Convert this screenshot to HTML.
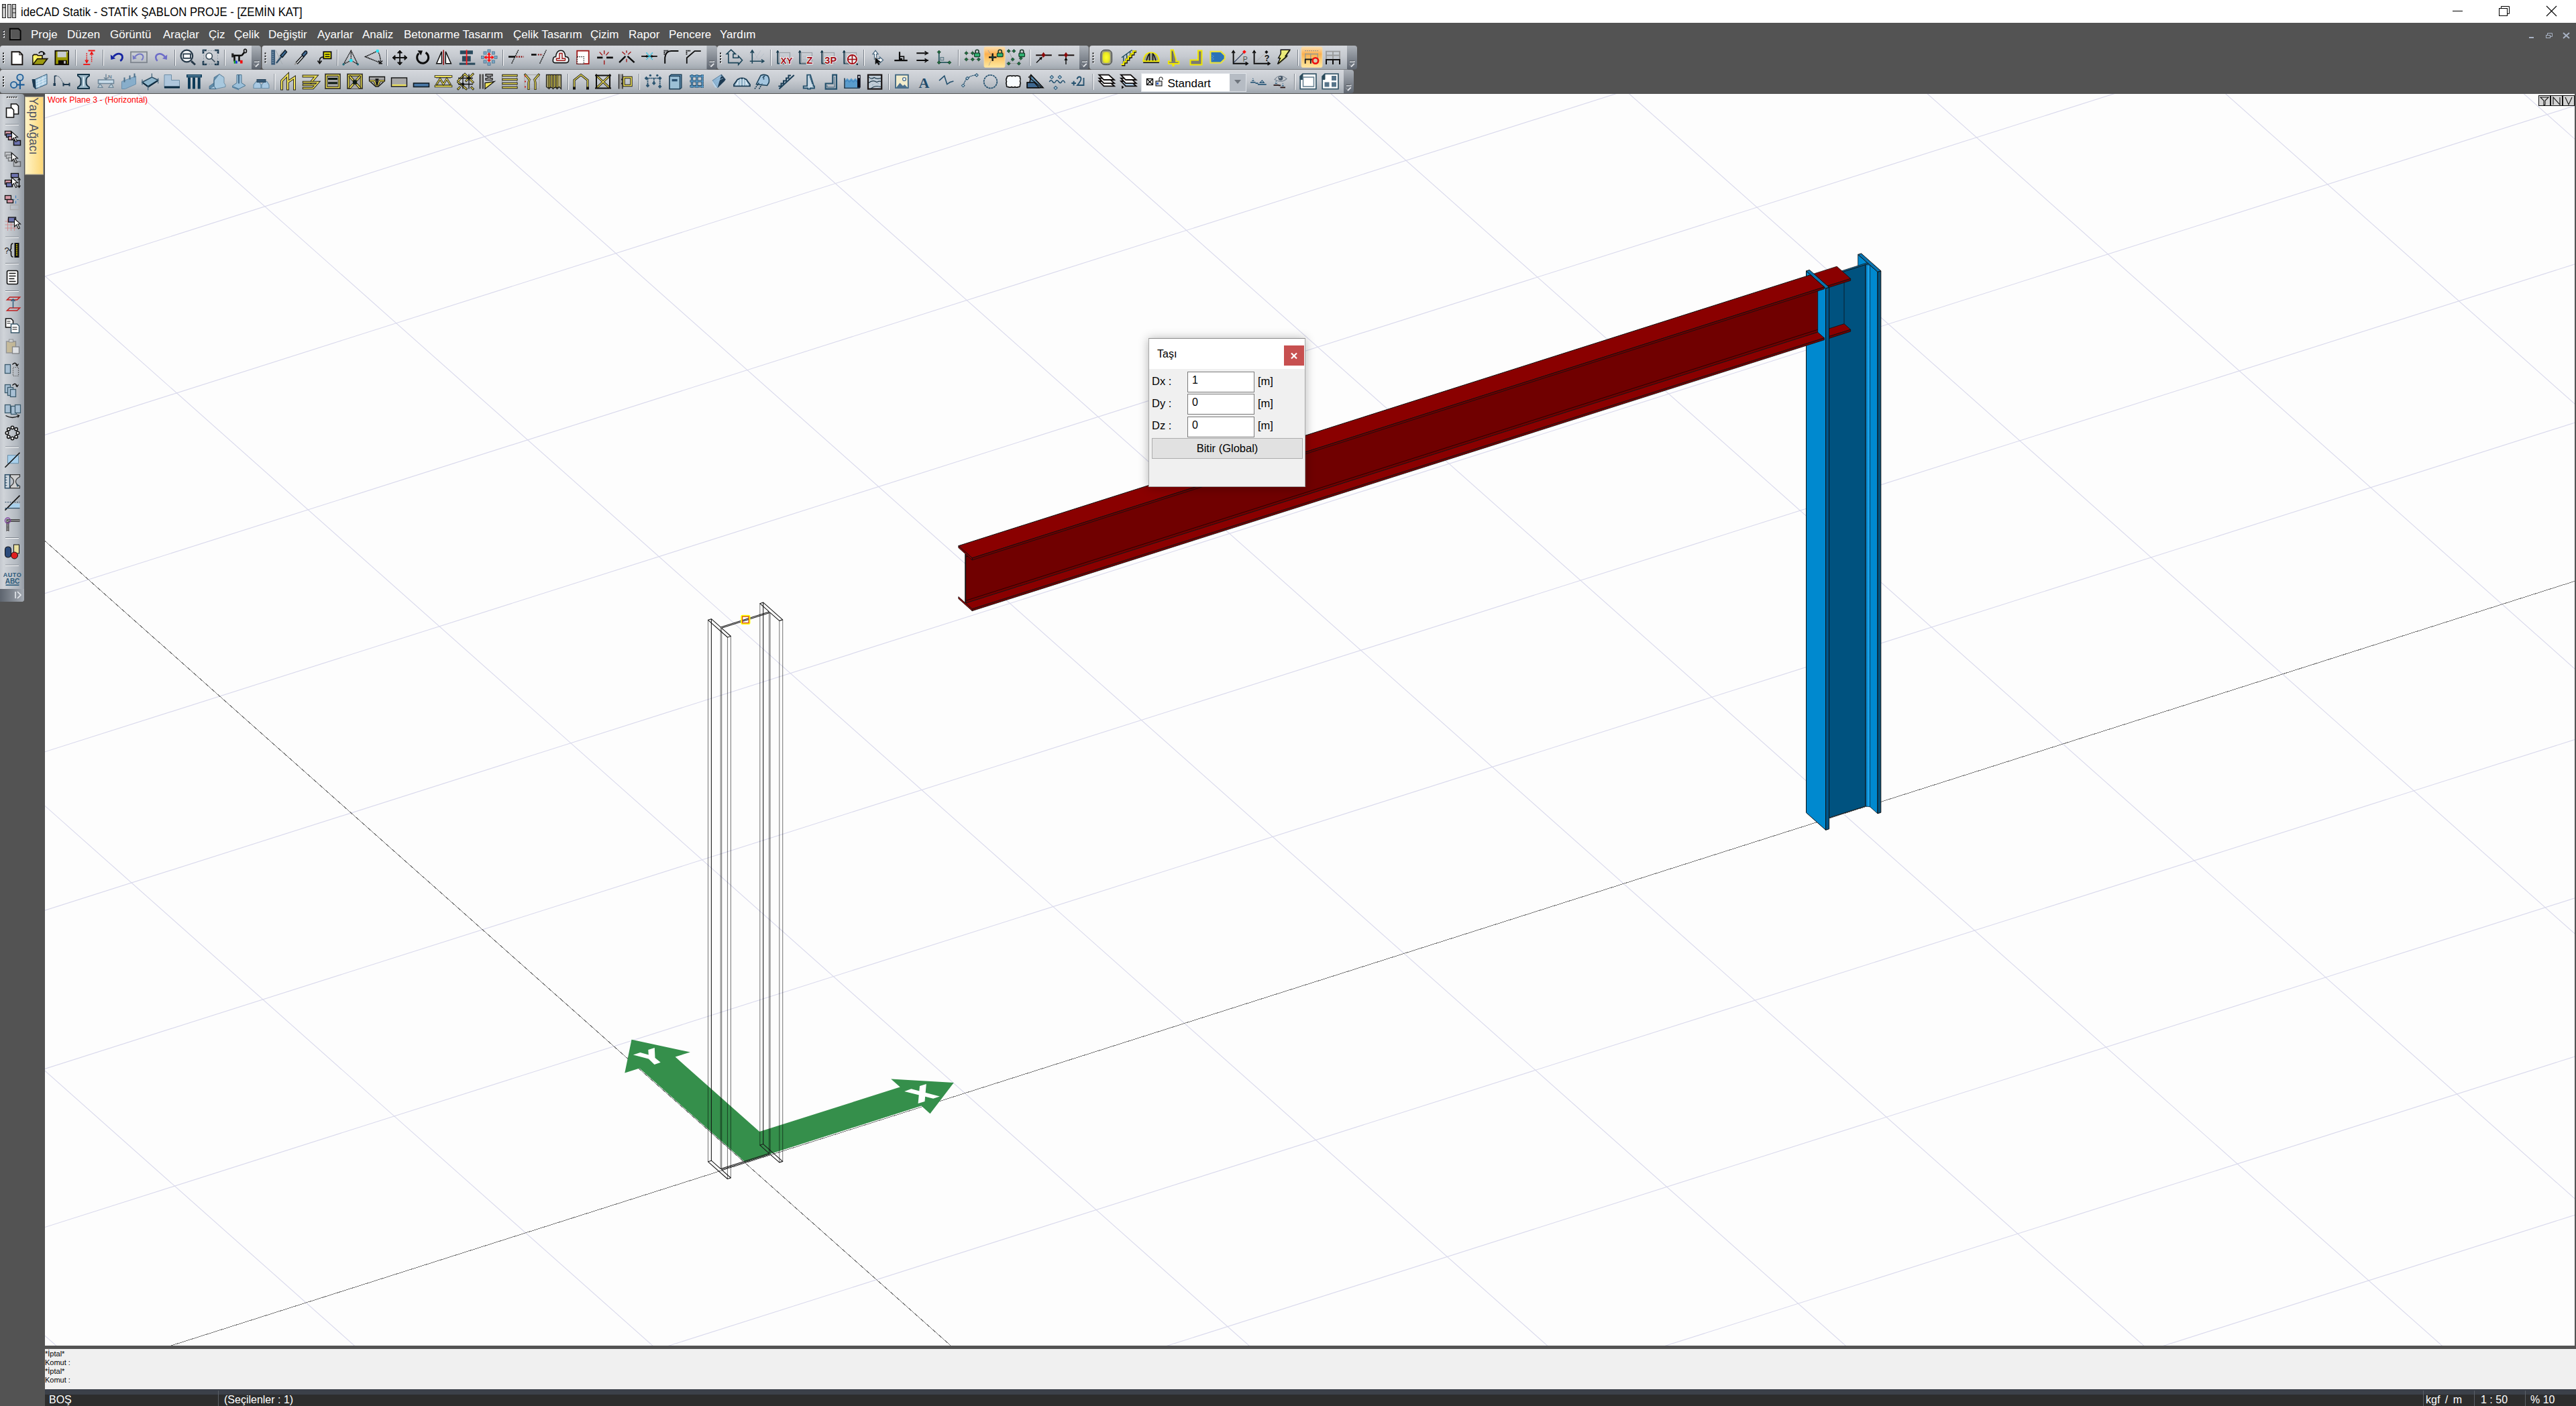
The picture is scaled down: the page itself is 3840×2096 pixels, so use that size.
<!DOCTYPE html>
<html><head><meta charset="utf-8">
<style>
*{box-sizing:border-box;margin:0;padding:0}
html,body{width:3840px;height:2096px;overflow:hidden;background:#535353;font-family:"Liberation Sans",sans-serif;position:relative}
.abs{position:absolute}
svg.vp{position:absolute;left:0;top:0}
#title{left:0;top:0;width:3840px;height:34px;background:#fff}
#title .t{position:absolute;left:31px;top:7px;font-size:18.5px;color:#000;white-space:nowrap;transform:scaleX(0.903);transform-origin:0 0}
#menu{left:0;top:34px;width:3840px;height:34px;background:#535353}
#menu span{position:absolute;top:8px;font-size:17px;color:#fff;white-space:nowrap}
.tb{position:absolute;border-radius:4px 0 0 4px;background:linear-gradient(#d4d8de 0%,#c9cdd3 45%,#b2b8bf 80%,#a2a9b1 100%);}
.tbh{position:absolute;border-radius:0 5px 5px 0;background:linear-gradient(#9ea5ad,#6d757e)}
#cmd{left:67px;top:2011px;width:3773px;height:60px;background:#f0f0f0}
#cmd div{position:absolute;left:0px;font-size:11px;color:#000;white-space:nowrap}
#status{left:67px;top:2071px;width:3773px;height:25px;background:#2d2d2d}
#status .band{position:absolute;left:0;top:0;width:100%;height:8px;background:#3b4049}
#status span{position:absolute;top:7px;font-size:16px;color:#fff;white-space:nowrap}
#status i{position:absolute;top:2px;width:1px;height:23px;background:#5a5f66}
#dlg .dl{font-size:16.5px;color:#000;white-space:nowrap}
#dlg .ib{width:100px;height:31px;background:#fff;border:1px solid #7a7a7a}
#dlg .ib span{position:absolute;left:6px;top:3px;font-size:16px;color:#000}
</style></head><body>
<div id="title" class="abs">
 <svg class="abs" style="left:3px;top:6px" width="22" height="21" viewBox="0 0 22 21">
  <rect x="0.5" y="0.5" width="5" height="20" fill="#c8c8c8" stroke="#222"/><rect x="0.5" y="0.5" width="5" height="5" fill="#aaa" stroke="#222"/>
  <rect x="8.5" y="0.5" width="5" height="20" fill="#c8c8c8" stroke="#222"/>
  <rect x="15.5" y="0.5" width="5" height="20" fill="#c8c8c8" stroke="#222"/><line x1="15" y1="7" x2="21" y2="7" stroke="#222"/><line x1="15" y1="13" x2="21" y2="13" stroke="#222"/>
 </svg>
 <div class="t">ideCAD Statik - STATİK ŞABLON PROJE - [ZEMİN KAT]</div>
 <svg class="abs" style="left:3650px;top:0" width="190" height="34" viewBox="3650 0 190 34">
  <line x1="3656" y1="16.5" x2="3671" y2="16.5" stroke="#000" stroke-width="1"/>
  <rect x="3725.5" y="12.5" width="12" height="11" fill="none" stroke="#000"/>
  <path d="M3728.5 12.5 V9.5 H3740.5 V20.5 H3737.5" fill="none" stroke="#000"/>
  <path d="M3796 9 L3811 24 M3811 9 L3796 24" stroke="#000" stroke-width="1.1"/>
 </svg>
</div>
<div id="menu" class="abs">
 <svg class="abs" style="left:0;top:0" width="40" height="34" viewBox="0 0 40 34">
  <rect x="4.8" y="12.0" width="2.2" height="2.2" fill="#fff"/><rect x="4.2" y="11.2" width="1.6" height="1.6" fill="#1a1e2a"/><rect x="4.8" y="16.0" width="2.2" height="2.2" fill="#fff"/><rect x="4.2" y="15.2" width="1.6" height="1.6" fill="#1a1e2a"/><rect x="4.8" y="20.0" width="2.2" height="2.2" fill="#fff"/><rect x="4.2" y="19.2" width="1.6" height="1.6" fill="#1a1e2a"/>
  <path d="M14.8 8.8 H27.5 L30.6 11.9 V25.2 H14.8 Z" fill="#575757" stroke="#050505" stroke-width="1.9"/><path d="M16.6 10.6 V23.4 H28.8" fill="none" stroke="#6e6e6e" stroke-width="1"/>
 </svg>
 <span style="left:46px">Proje</span>
 <span style="left:100px">Düzen</span>
 <span style="left:164px">Görüntü</span>
 <span style="left:243px">Araçlar</span>
 <span style="left:311px">Çiz</span>
 <span style="left:349px">Çelik</span>
 <span style="left:400px">Değiştir</span>
 <span style="left:473px">Ayarlar</span>
 <span style="left:540px">Analiz</span>
 <span style="left:602px">Betonarme Tasarım</span>
 <span style="left:765px">Çelik Tasarım</span>
 <span style="left:880px">Çizim</span>
 <span style="left:937px">Rapor</span>
 <span style="left:997px">Pencere</span>
 <span style="left:1073px">Yardım</span>
 <svg class="abs" style="left:3760px;top:0" width="80" height="34" viewBox="3760 34 80 34">
  <rect x="3770" y="55" width="7" height="2" fill="#a9b3c4"/>
  <rect x="3795.5" y="52.5" width="6" height="4" fill="none" stroke="#a9b3c4"/><path d="M3797.5 52.5 V49.5 H3804.5 V54.5 H3801.5" fill="none" stroke="#a9b3c4"/>
  <path d="M3821 49 L3830 57 M3830 49 L3821 57" stroke="#a9b3c4" stroke-width="2"/>
 </svg>
</div>
<svg class="abs" style="left:0;top:0" width="2030" height="140" viewBox="0 0 2030 140">
<defs><linearGradient id="bg" x1="0" y1="0" x2="0" y2="1"><stop offset="0" stop-color="#d5d8dd"/><stop offset="0.45" stop-color="#c6cad0"/><stop offset="0.8" stop-color="#b0b6bd"/><stop offset="1" stop-color="#9ea5ad"/></linearGradient><linearGradient id="hg" x1="0" y1="0" x2="0" y2="1"><stop offset="0" stop-color="#acb1b8"/><stop offset="1" stop-color="#5d646e"/></linearGradient><linearGradient id="og" x1="0" y1="0" x2="0" y2="1"><stop offset="0" stop-color="#fde0b0"/><stop offset="0.35" stop-color="#fcb04f"/><stop offset="0.7" stop-color="#fdd27a"/><stop offset="1" stop-color="#fee8a0"/></linearGradient></defs>
<rect x="0" y="68" width="379" height="35.5" rx="4" fill="url(#bg)"/>
<path d="M375 68 H385 Q389 68 389 72 V99.5 Q389 103.5 385 103.5 H375 Z" fill="url(#hg)"/><rect x="378.5" y="90.3" width="8" height="1.4" fill="#5a5e64"/><path d="M379 92.2 H385.8 V90.9" stroke="#d0d4d8" stroke-width="1.6" fill="none"/><path d="M378.2 95.5 L381.5 99.3" stroke="#8e9298" stroke-width="1.4" fill="none"/><path d="M381 99.5 L385.8 94.9" stroke="#e4e6ea" stroke-width="1.8" fill="none"/>
<rect x="390.5" y="68" width="667.0" height="35.5" rx="4" fill="url(#bg)"/>
<path d="M1053.5 68 H1065 Q1069 68 1069 72 V99.5 Q1069 103.5 1065 103.5 H1053.5 Z" fill="url(#hg)"/><rect x="1057.0" y="90.3" width="8" height="1.4" fill="#5a5e64"/><path d="M1057.5 92.2 H1064.3 V90.9" stroke="#d0d4d8" stroke-width="1.6" fill="none"/><path d="M1056.7 95.5 L1060.0 99.3" stroke="#8e9298" stroke-width="1.4" fill="none"/><path d="M1059.5 99.5 L1064.3 94.9" stroke="#e4e6ea" stroke-width="1.8" fill="none"/>
<rect x="1069" y="68" width="544" height="35.5" rx="4" fill="url(#bg)"/>
<path d="M1609 68 H1619 Q1623 68 1623 72 V99.5 Q1623 103.5 1619 103.5 H1609 Z" fill="url(#hg)"/><rect x="1612.5" y="90.3" width="8" height="1.4" fill="#5a5e64"/><path d="M1613 92.2 H1619.8 V90.9" stroke="#d0d4d8" stroke-width="1.6" fill="none"/><path d="M1612.2 95.5 L1615.5 99.3" stroke="#8e9298" stroke-width="1.4" fill="none"/><path d="M1615 99.5 L1619.8 94.9" stroke="#e4e6ea" stroke-width="1.8" fill="none"/>
<rect x="1624" y="68" width="388" height="35.5" rx="4" fill="url(#bg)"/>
<path d="M2008 68 H2019 Q2023 68 2023 72 V99.5 Q2023 103.5 2019 103.5 H2008 Z" fill="url(#hg)"/><rect x="2011.5" y="90.3" width="8" height="1.4" fill="#5a5e64"/><path d="M2012 92.2 H2018.8 V90.9" stroke="#d0d4d8" stroke-width="1.6" fill="none"/><path d="M2011.2 95.5 L2014.5 99.3" stroke="#8e9298" stroke-width="1.4" fill="none"/><path d="M2014 99.5 L2018.8 94.9" stroke="#e4e6ea" stroke-width="1.8" fill="none"/>
<rect x="0" y="104" width="2007" height="35" rx="4" fill="url(#bg)"/>
<path d="M2003 104 H2014 Q2018 104 2018 108 V135 Q2018 139 2014 139 H2003 Z" fill="url(#hg)"/><rect x="2006.5" y="125.8" width="8" height="1.4" fill="#5a5e64"/><path d="M2007 127.7 H2013.8 V126.4" stroke="#d0d4d8" stroke-width="1.6" fill="none"/><path d="M2006.2 131 L2009.5 134.8" stroke="#8e9298" stroke-width="1.4" fill="none"/><path d="M2009 135 L2013.8 130.4" stroke="#e4e6ea" stroke-width="1.8" fill="none"/>
<rect x="5" y="79.5" width="2" height="2" fill="#fff"/><rect x="4" y="78.5" width="2" height="2" fill="#111"/><rect x="5" y="83.8" width="2" height="2" fill="#fff"/><rect x="4" y="82.8" width="2" height="2" fill="#111"/><rect x="5" y="88.1" width="2" height="2" fill="#fff"/><rect x="4" y="87.1" width="2" height="2" fill="#111"/><rect x="5" y="92.4" width="2" height="2" fill="#fff"/><rect x="4" y="91.4" width="2" height="2" fill="#111"/>
<rect x="395.5" y="79.5" width="2" height="2" fill="#fff"/><rect x="394.5" y="78.5" width="2" height="2" fill="#111"/><rect x="395.5" y="83.8" width="2" height="2" fill="#fff"/><rect x="394.5" y="82.8" width="2" height="2" fill="#111"/><rect x="395.5" y="88.1" width="2" height="2" fill="#fff"/><rect x="394.5" y="87.1" width="2" height="2" fill="#111"/><rect x="395.5" y="92.4" width="2" height="2" fill="#fff"/><rect x="394.5" y="91.4" width="2" height="2" fill="#111"/>
<rect x="1074" y="79.5" width="2" height="2" fill="#fff"/><rect x="1073" y="78.5" width="2" height="2" fill="#111"/><rect x="1074" y="83.8" width="2" height="2" fill="#fff"/><rect x="1073" y="82.8" width="2" height="2" fill="#111"/><rect x="1074" y="88.1" width="2" height="2" fill="#fff"/><rect x="1073" y="87.1" width="2" height="2" fill="#111"/><rect x="1074" y="92.4" width="2" height="2" fill="#fff"/><rect x="1073" y="91.4" width="2" height="2" fill="#111"/>
<rect x="1629.5" y="79.5" width="2" height="2" fill="#fff"/><rect x="1628.5" y="78.5" width="2" height="2" fill="#111"/><rect x="1629.5" y="83.8" width="2" height="2" fill="#fff"/><rect x="1628.5" y="82.8" width="2" height="2" fill="#111"/><rect x="1629.5" y="88.1" width="2" height="2" fill="#fff"/><rect x="1628.5" y="87.1" width="2" height="2" fill="#111"/><rect x="1629.5" y="92.4" width="2" height="2" fill="#fff"/><rect x="1628.5" y="91.4" width="2" height="2" fill="#111"/>
<rect x="5" y="115.0" width="2" height="2" fill="#fff"/><rect x="4" y="114.0" width="2" height="2" fill="#111"/><rect x="5" y="119.3" width="2" height="2" fill="#fff"/><rect x="4" y="118.3" width="2" height="2" fill="#111"/><rect x="5" y="123.6" width="2" height="2" fill="#fff"/><rect x="4" y="122.6" width="2" height="2" fill="#111"/><rect x="5" y="127.9" width="2" height="2" fill="#fff"/><rect x="4" y="126.9" width="2" height="2" fill="#111"/>
<rect x="112" y="74" width="1" height="24" fill="#7b828b"/><rect x="113" y="74" width="1" height="24" fill="#fff"/>
<rect x="153" y="74" width="1" height="24" fill="#7b828b"/><rect x="154" y="74" width="1" height="24" fill="#fff"/>
<rect x="260" y="74" width="1" height="24" fill="#7b828b"/><rect x="261" y="74" width="1" height="24" fill="#fff"/>
<rect x="334" y="74" width="1" height="24" fill="#7b828b"/><rect x="335" y="74" width="1" height="24" fill="#fff"/>
<rect x="502" y="74" width="1" height="24" fill="#7b828b"/><rect x="503" y="74" width="1" height="24" fill="#fff"/>
<rect x="576" y="74" width="1" height="24" fill="#7b828b"/><rect x="577" y="74" width="1" height="24" fill="#fff"/>
<rect x="749" y="74" width="1" height="24" fill="#7b828b"/><rect x="750" y="74" width="1" height="24" fill="#fff"/>
<rect x="1148" y="74" width="1" height="24" fill="#7b828b"/><rect x="1149" y="74" width="1" height="24" fill="#fff"/>
<rect x="1287" y="74" width="1" height="24" fill="#7b828b"/><rect x="1288" y="74" width="1" height="24" fill="#fff"/>
<rect x="1428" y="74" width="1" height="24" fill="#7b828b"/><rect x="1429" y="74" width="1" height="24" fill="#fff"/>
<rect x="1534.5" y="74" width="1" height="24" fill="#7b828b"/><rect x="1535.5" y="74" width="1" height="24" fill="#fff"/>
<rect x="1934" y="74" width="1" height="24" fill="#7b828b"/><rect x="1935" y="74" width="1" height="24" fill="#fff"/>
<rect x="408.5" y="110" width="1" height="24" fill="#7b828b"/><rect x="409.5" y="110" width="1" height="24" fill="#fff"/>
<rect x="846" y="110" width="1" height="24" fill="#7b828b"/><rect x="847" y="110" width="1" height="24" fill="#fff"/>
<rect x="952" y="110" width="1" height="24" fill="#7b828b"/><rect x="953" y="110" width="1" height="24" fill="#fff"/>
<rect x="1324" y="110" width="1" height="24" fill="#7b828b"/><rect x="1325" y="110" width="1" height="24" fill="#fff"/>
<rect x="1628.5" y="110" width="1" height="24" fill="#7b828b"/><rect x="1629.5" y="110" width="1" height="24" fill="#fff"/>
<rect x="1929" y="110" width="1" height="24" fill="#7b828b"/><rect x="1930" y="110" width="1" height="24" fill="#fff"/>
<rect x="1467" y="70" width="31" height="30.5" rx="2" fill="url(#og)" stroke="#f4d9a6" stroke-width="1"/>
<rect x="1940" y="70" width="31" height="30.5" rx="2" fill="url(#og)" stroke="#f4d9a6" stroke-width="1"/>
<rect x="1701.5" y="109.5" width="156" height="27" fill="#fff" stroke="#dfe3e8"/>
<rect x="1833" y="110" width="24" height="26" fill="#b6bcc4"/>
<path d="M1840 119 L1850 119 L1845 125 Z" fill="#6e747c"/>
<rect x="1709.5" y="117.5" width="9" height="9" fill="#fff" stroke="#000" stroke-width="1.3"/><path d="M1710 118 L1718 126 M1718 118 L1710 126" stroke="#000" stroke-width="1.3"/>
<rect x="1723" y="121" width="9" height="7" fill="#ddd" stroke="#000"/><path d="M1728 121 V117 Q1728 115 1730.5 115 Q1733 115 1733 117 V119" fill="none" stroke="#000"/><rect x="1724" y="123" width="3" height="3" fill="#3a6bd4"/>
<text x="1740.5" y="130" font-family="Liberation Sans, sans-serif" font-size="17" fill="#000">Standart</text>
<g transform="translate(25.5,86)"><path d="M-8 -8.7 H3.6 L7.9 -4.4 V10.3 H-8 Z" fill="#fff" stroke="#161210" stroke-width="1.9" /><path d="M3.4 -8.5 V-4.3 H7.7" fill="none" stroke="#161210" stroke-width="1.1" /></g>
<g transform="translate(59.5,86)"><path d="M-10.6 10.3 V-3.2 L-8.8 -4.6 H-4.5 L-3 -3.2 H3.5 V1.5" fill="#fff060" stroke="#1a1408" stroke-width="1.6" /><path d="M-10 -2.5 L-3 2 L-9.5 8 Z" fill="#ffff70" stroke="none" stroke-width="0" /><path d="M-10.4 10.3 L-3.8 1.6 H11.2 L4.6 10.3 Z" fill="#9c9a10" stroke="#1a1408" stroke-width="1.6" /><path d="M-1.8 -6.5 Q2 -11.5 6.8 -6.8" fill="none" stroke="#111" stroke-width="1.7" /><path d="M4.5 -8.5 L8.8 -5.4 L4.6 -3.4 Z" fill="#111" stroke="none" stroke-width="0" /></g>
<g transform="translate(92,86)"><rect x="-9.6" y="-10.2" width="19.6" height="20.4" fill="#9c9a00" stroke="#100c04" stroke-width="1.8"/><rect x="-6.4" y="-9.2" width="13.2" height="8.6" fill="#c8ccd0"/><rect x="-5.2" y="3.8" width="13" height="6.4" fill="#100c08"/><rect x="3.2" y="4.8" width="2.6" height="4" fill="#c8c8c8"/><rect x="7.8" y="-9.4" width="1.4" height="1.4" fill="#fff"/></g>
<g transform="translate(133,86)"><path d="M-3.7 -7 V9.5 M3.6 -9 V7.5" fill="none" stroke="#ee1010" stroke-width="1.5" stroke-dasharray="1.6 1.1"/><path d="M-8.8 10.2 H1.3 M-1.4 -10.5 H8.6" fill="none" stroke="#ee1010" stroke-width="1.8" /><path d="M-6.8 3.5 L-3.7 8.4 L-0.6 3.5 Z M0.5 -4.5 L3.6 -9.4 L6.7 -4.5 Z" fill="#ee1010" stroke="none" stroke-width="0" /></g>
<g transform="translate(174,86)"><path d="M-5 -1.5 Q-1 -6 3.5 -5.8 Q8.5 -5.2 8.5 -0.5 Q8.3 3 5.2 4.8" fill="none" stroke="#1424a0" stroke-width="2.8" /><path d="M-9.2 -4.6 L-8.6 3 L-1.8 1.2 Z" fill="#1424a0" stroke="none" stroke-width="0" /></g>
<g transform="translate(207,86)"><rect x="-12" y="-8.6" width="24" height="15.8" fill="none" stroke="#7e858e" stroke-width="1.8"/><path d="M-6 -1.5 Q-2 -5.8 2 -5.6 Q6.5 -5 6.5 -1 Q6.3 2 4 3.6" fill="none" stroke="#7478c4" stroke-width="2" /><path d="M-9.5 -4 L-9 2.8 L-3 1 Z" fill="#7478c4" stroke="none" stroke-width="0" /></g>
<g transform="translate(240,86)"><path d="M5.8 -1.5 Q2 -6 -2.5 -5.8 Q-7.5 -5.2 -7.8 -0.5 Q-7.6 3 -5.3 4.8" fill="none" stroke="#6c6cc8" stroke-width="2.6" /><path d="M9.3 -4.6 L8.8 3 L2 1.2 Z" fill="#6c6cc8" stroke="none" stroke-width="0" /></g>
<g transform="translate(280.5,86)"><circle cx="-2.1" cy="-2.5" r="8.8" fill="#f2f4f6" stroke="#263848" stroke-width="2.2"/><rect x="-7.2" y="-5.6" width="10.8" height="6.4" fill="#fff" stroke="#263848" stroke-width="1.8"/><path d="M4.6 5.2 L10.5 10.5" fill="none" stroke="#263848" stroke-width="3" /></g>
<g transform="translate(314,86)"><path d="M-11 -6 V-11 H-6 M6 -11 H11 V-6 M11 5 V10 H6 M-6 10 H-11 V5" fill="none" stroke="#16344a" stroke-width="2.6" /><rect x="-10.5" y="-10.5" width="21" height="20" fill="none" stroke="#7a8c9a" stroke-width="0.9" stroke-dasharray="1.5 2"/><circle cx="-2.2" cy="-2.4" r="4.6" fill="#fff" stroke="#3a4c5a" stroke-width="1.6"/><path d="M1.2 1.2 L6.5 6.5" fill="none" stroke="#3a4c5a" stroke-width="1.6" /></g>
<g transform="translate(356,86)"><path d="M-9 -3.3 H4.5 M-6.5 -3.3 V5.5 M0.5 -3.3 V5.5 M4.5 -3.3 L8.5 -8.5" fill="none" stroke="#0e0e0e" stroke-width="2.6" /><rect x="-10.8" y="-6.5" width="3.2" height="6" fill="#222"/><ellipse cx="9.5" cy="-10" rx="2" ry="2.8" fill="none" stroke="#111" stroke-width="1.6"/><rect x="-7.3" y="4.5" width="2.5" height="4.2" fill="#10a020"/><rect x="-4.8" y="4.5" width="2.5" height="4.2" fill="#1030e0"/><rect x="2" y="3.8" width="3.6" height="4.8" fill="#f01010"/></g>
<g transform="translate(416,86)"><rect x="-11.7" y="-11.6" width="5.8" height="22.2" fill="#3c5c7a"/><path d="M-10.5 -8 H-8 M-10.5 -5 H-8 M-10.5 -2 H-8 M-10.5 1 H-8 M-10.5 4 H-8 M-10.5 7 H-8" fill="none" stroke="#a8c0d4" stroke-width="0.8" /><path d="M-5 -11 L5 10 M5 -11 L-5 10" fill="none" stroke="#a0a8ae" stroke-width="0.9" /><path d="M-4 8 L3.5 -1.5" fill="none" stroke="#2d4c66" stroke-width="2.2" /><path d="M2 -3 L9 -11.2 L11.5 -8.5 L5 -0.5 Z" fill="#3b6a94" stroke="#0e1a26" stroke-width="1.4" /></g>
<g transform="translate(448.5,86)"><path d="M-6.5 8.5 L4 -3" fill="none" stroke="#0e0e0e" stroke-width="4.2" /><path d="M-6 8 L3.5 -2.5" fill="none" stroke="#e8eef2" stroke-width="1.6" /><path d="M1.5 -4.5 L6.2 -9.8 Q9.8 -10.6 9 -6.5 L4 -1 Z" fill="#426a92" stroke="#0e1620" stroke-width="1.4" /><path d="M-9.5 10.5 L-6.5 7.5" fill="none" stroke="#9a9a9a" stroke-width="2.2" /></g>
<g transform="translate(483.5,86)"><rect x="-1.2" y="-8.7" width="11.3" height="10.1" fill="#f4f000" stroke="#0e0e0e" stroke-width="1.8"/><path d="M1 -5 H8 M1 -1.8 H8" fill="none" stroke="#0e0e0e" stroke-width="1.6" /><path d="M-1.2 -1 Q-7 -1 -7 4 V8.2" fill="none" stroke="#0e0e0e" stroke-width="1.6" /><path d="M-10 4.6 L-7 8.6 L-4 4.6" fill="none" stroke="#0e0e0e" stroke-width="1.6" /></g>
<g transform="translate(522.5,86)"><path d="M-10.5 9.9 L0.8 -10.7 L10.9 9.9 M0.8 -10.7 V4 M-10.5 9.9 L0.8 4 L10.9 9.9" fill="none" stroke="#141414" stroke-width="1.3" stroke-dasharray="2 0.6"/><circle cx="0.8" cy="4.2" r="2.4" fill="#22e4f4"/><circle cx="-10.5" cy="9.9" r="1.6" fill="#1a6a7a"/><circle cx="10.9" cy="9.9" r="1.6" fill="#1a6a7a"/></g>
<g transform="translate(556,86)"><path d="M-11.5 -1.4 L6.7 -9.9 Q11.5 -4 11 7.8 Z" fill="none" stroke="#141414" stroke-width="1.4" stroke-dasharray="2 0.6"/><path d="M8 4.5 L11 8 L14 4.5 M8.5 8.8 H14" fill="none" stroke="#141414" stroke-width="1.4" /><circle cx="6.7" cy="-9.9" r="2.3" fill="#22e4f4"/></g>
<g transform="translate(596,86)"><path d="M-11 0 H11 M0 -11 V11" fill="none" stroke="#111" stroke-width="1.8" /><path d="M-11 0 L-7 -3.5 V3.5 Z M11 0 L7 -3.5 V3.5 Z M0 -11 L-3.5 -7 H3.5 Z M0 11 L-3.5 7 H3.5 Z" fill="#111" stroke="#111" stroke-width="1" /></g>
<g transform="translate(630,86)"><path d="M-5.6 -6.5 A8.5 8.5 0 1 0 4.5 -7.6" fill="none" stroke="#0c0c0c" stroke-width="3" /><path d="M-7.5 -10.8 L0 -10.5 L-2.5 -3.6 Z" fill="#0c0c0c" stroke="none" stroke-width="0" /></g>
<g transform="translate(662,86)"><path d="M-11.3 8.7 L-3.6 -9.1 V8.7 Z" fill="#fff" stroke="#111" stroke-width="1.5" /><path d="M2.3 -9.1 L10.4 8.7 H2.3 Z" fill="#fff" stroke="#111" stroke-width="1.5" /><path d="M-0.8 -11.6 V10.8" fill="none" stroke="#9a1010" stroke-width="1.6" /></g>
<g transform="translate(695.5,86)"><rect x="-9.7" y="-10.7" width="19.1" height="5.5" fill="#2a4a5c"/><rect x="-6.6" y="-2.5" width="12.8" height="8.1" fill="#2a4a5c"/><rect x="-10.7" y="7.6" width="23.5" height="3.1" fill="#2a4a5c"/><path d="M0.1 -11.6 V10.8" fill="none" stroke="#ff1a1a" stroke-width="1.8" /></g>
<g transform="translate(728.5,86)"><rect x="-1.6" y="-12.1" width="4.2" height="4.2" fill="#7aa6c4" stroke="#3c6680" stroke-width="0.6"/><rect x="-7.6" y="-9.1" width="4.2" height="4.2" fill="#7aa6c4" stroke="#3c6680" stroke-width="0.6"/><rect x="4.9" y="-9.1" width="4.2" height="4.2" fill="#7aa6c4" stroke="#3c6680" stroke-width="0.6"/><rect x="-11.1" y="-2.6" width="4.2" height="4.2" fill="#7aa6c4" stroke="#3c6680" stroke-width="0.6"/><rect x="8.4" y="-2.6" width="4.2" height="4.2" fill="#7aa6c4" stroke="#3c6680" stroke-width="0.6"/><rect x="-7.6" y="3.9" width="4.2" height="4.2" fill="#7aa6c4" stroke="#3c6680" stroke-width="0.6"/><rect x="4.9" y="3.9" width="4.2" height="4.2" fill="#7aa6c4" stroke="#3c6680" stroke-width="0.6"/><rect x="-1.6" y="7.4" width="4.2" height="4.2" fill="#7aa6c4" stroke="#3c6680" stroke-width="0.6"/><path d="M0.5 -6.8 V5.6 M-5.8 -0.5 H6.8" fill="none" stroke="#ff1010" stroke-width="2" /><path d="M0.5 -8 L-2.5 -4.2 H3.5 Z M0.5 6.8 L-2.5 3 H3.5 Z M-7 -0.5 L-3.2 -3.5 V2.5 Z M8 -0.5 L4.2 -3.5 V2.5 Z" fill="#ff1010" stroke="none" stroke-width="0" /></g>
<g transform="translate(769,86)"><path d="M-11 -1.4 H-1" fill="none" stroke="#0c0c0c" stroke-width="2.6" /><path d="M0.5 -1.4 H11.6" fill="none" stroke="#8a1010" stroke-width="2.2" stroke-dasharray="2 1.5"/><path d="M-6.3 8.7 L3.8 -11.5" fill="none" stroke="#111" stroke-width="1.3" stroke-dasharray="2.2 0.8"/></g>
<g transform="translate(803,86)"><path d="M-11 -4.5 H-3.3" fill="none" stroke="#0c0c0c" stroke-width="2.6" /><path d="M-1.2 -4.5 H6" fill="none" stroke="#8a1010" stroke-width="2.2" stroke-dasharray="2 1.5"/><path d="M1.6 8.7 L11.4 -11.5" fill="none" stroke="#111" stroke-width="1.3" stroke-dasharray="2.2 0.8"/></g>
<g transform="translate(836,86)"><path d="M-9 7.6 Q-12.5 7 -11.5 2.5 Q-11.5 -1.5 -7.5 -1.5 Q-6.5 -10.7 0.2 -10.7 Q6 -10.7 6.8 -1.5 Q11.8 -1.5 11.8 3 Q11.8 7.6 8 7.6 Z" fill="#eef0f2" stroke="#141414" stroke-width="1.6" /><path d="M-6.5 4.3 H6.5 M-6.5 4.3 V1.2 H-2 V-6.5 H2 V1.2 H6.5 V4.3" fill="none" stroke="#a01818" stroke-width="1.4" /></g>
<g transform="translate(869,86)"><rect x="-8.8" y="-10.3" width="17.5" height="19.4" fill="#fff" stroke="#a01818" stroke-width="1.8"/><rect x="-8.6" y="-1.4" width="9.9" height="10.5" fill="#fff" stroke="#111" stroke-width="1.1" stroke-dasharray="1.5 1.5"/></g>
<g transform="translate(902,86)"><path d="M-11.9 -0.2 H-3.6 M2 -0.2 H11.8" fill="none" stroke="#0c0c0c" stroke-width="2.8" /><path d="M-1.3 -10.7 V-5.3 M-1.3 4 V10.3 M-8.3 -8.4 L-4 -3.6 M5.4 -8.4 L1.4 -3.6" fill="none" stroke="#a01818" stroke-width="1.4" /></g>
<g transform="translate(934,86)"><path d="M-10.9 7.2 L-1.6 -2.1 M1.5 -2.1 L11.6 7.2" fill="none" stroke="#0c0c0c" stroke-width="2.4" /><path d="M0 -10.7 V-7.2 M0 1.8 V6.4 M-6.6 -8.7 L-2 -4.8 M6.5 -8.7 L2.2 -4.8" fill="none" stroke="#a01818" stroke-width="1.4" /></g>
<g transform="translate(968,86)"><path d="M-11.9 -2.1 H11.8" fill="none" stroke="#0c0c0c" stroke-width="1.8" /><path d="M-4.5 -7.6 L4.8 2.9 M4.8 -7.6 L-4.5 2.9" fill="none" stroke="#20c0e0" stroke-width="1.5" stroke-dasharray="1.8 0.8"/><path d="M-7 -2.1 L-3.2 -4.2 V0 Z M6.8 -2.1 L3 -4.2 V0 Z" fill="#0c0c0c" stroke="none" stroke-width="0" /></g>
<g transform="translate(1000,86)"><path d="M-8.8 8.7 V0 Q-7.5 -9.9 0.5 -9.9 H11.4" fill="none" stroke="#0c0c0c" stroke-width="2" /><rect x="-10.5" y="-11.200000000000001" width="1.8" height="1.8" fill="#111"/><rect x="-8.1" y="-11.200000000000001" width="1.8" height="1.8" fill="#111"/><rect x="-5.7" y="-11.200000000000001" width="1.8" height="1.8" fill="#111"/><rect x="-10.5" y="-8.7" width="1.8" height="1.8" fill="#111"/><rect x="-10.5" y="-6.300000000000001" width="1.8" height="1.8" fill="#111"/></g>
<g transform="translate(1033.5,86)"><path d="M-9.7 8.7 V0.2 L2 -9.9 H11.3" fill="none" stroke="#0c0c0c" stroke-width="1.8" /><rect x="-10.9" y="-11.200000000000001" width="1.8" height="1.8" fill="#111"/><rect x="-8.5" y="-11.200000000000001" width="1.8" height="1.8" fill="#111"/><rect x="-6.1000000000000005" y="-11.200000000000001" width="1.8" height="1.8" fill="#111"/><rect x="-10.9" y="-8.7" width="1.8" height="1.8" fill="#111"/><rect x="-10.9" y="-6.300000000000001" width="1.8" height="1.8" fill="#111"/></g>
<g transform="translate(1095,86)"><path d="M-9.1 7.6 V-5.6 H-11.8 L-5.2 -11.8 L1.4 -5.6 H-2.1 V0.2 H5.7 V-2.5 L11.5 3.7 L5.7 10.3 V7.6 Z" fill="none" stroke="#1c4458" stroke-width="1.6" /></g>
<g transform="translate(1128,86)"><path d="M-6 -11 L6 9 M6 -11 L-6 9 M-11 -6 L3 9 M11 -6 L-3 9" fill="none" stroke="#b4bcc6" stroke-width="0.8" /><path d="M-6.7 -10.7 V8.7 M-10.2 5.2 H10.3" fill="none" stroke="#1c4458" stroke-width="1.6" /><path d="M-9.2 -7 L-6.7 -11 L-4.2 -7 M7 2.7 L10.8 5.2 L7 7.7" fill="none" stroke="#1c4458" stroke-width="1.5" /></g>
<g transform="translate(1169,86)"><path d="M-9.7 -10.3 V8.7 H0" fill="none" stroke="#16384a" stroke-width="1.8" /><path d="M-11.6 -7.6 L-9.7 -10.8 L-7.8 -7.6" fill="#16384a" stroke="#16384a" stroke-width="1" /><rect x="-7.5" y="-7.5" width="16" height="15.5" fill="none" stroke="#9aa0a6" stroke-width="1.2"/><path d="M-5 -2 H0 M-5 2.5 H0" fill="none" stroke="#aab" stroke-width="0.8" stroke-dasharray="1.5 1"/><text x="3.5" y="8.6" text-anchor="middle" font-family="Liberation Sans" font-weight="700" font-size="13.5" fill="#a00c14" stroke="#fff" stroke-width="1.6" paint-order="stroke" style="font-weight:bold">XY</text></g>
<g transform="translate(1202,86)"><path d="M-9.7 -10.3 V8.7 H0" fill="none" stroke="#16384a" stroke-width="1.8" /><path d="M-11.6 -7.6 L-9.7 -10.8 L-7.8 -7.6" fill="#16384a" stroke="#16384a" stroke-width="1" /><rect x="-7.5" y="-7.5" width="16" height="15.5" fill="none" stroke="#9aa0a6" stroke-width="1.2"/><path d="M-5 -2 H0 M-5 2.5 H0" fill="none" stroke="#aab" stroke-width="0.8" stroke-dasharray="1.5 1"/><text x="4.8" y="8.6" text-anchor="middle" font-family="Liberation Sans" font-weight="700" font-size="15" fill="#a00c14" stroke="#fff" stroke-width="1.6" paint-order="stroke" style="font-weight:bold">Z</text></g>
<g transform="translate(1235,86)"><path d="M-9.7 -10.3 V8.7 H0" fill="none" stroke="#16384a" stroke-width="1.8" /><path d="M-11.6 -7.6 L-9.7 -10.8 L-7.8 -7.6" fill="#16384a" stroke="#16384a" stroke-width="1" /><rect x="-7.5" y="-7.5" width="16" height="15.5" fill="none" stroke="#9aa0a6" stroke-width="1.2"/><path d="M-5 -2 H0 M-5 2.5 H0" fill="none" stroke="#aab" stroke-width="0.8" stroke-dasharray="1.5 1"/><text x="3.2" y="8.6" text-anchor="middle" font-family="Liberation Sans" font-weight="700" font-size="14.5" fill="#a00c14" stroke="#fff" stroke-width="1.6" paint-order="stroke" style="font-weight:bold">3P</text></g>
<g transform="translate(1268,86)"><path d="M-9.7 -10.3 V8.7 H0" fill="none" stroke="#16384a" stroke-width="1.8" /><path d="M-11.6 -7.6 L-9.7 -10.8 L-7.8 -7.6" fill="#16384a" stroke="#16384a" stroke-width="1" /><rect x="-7.5" y="-7.5" width="16" height="15.5" fill="none" stroke="#9aa0a6" stroke-width="1.2"/><circle cx="2.4" cy="2.5" r="6.6" fill="#e8f0f0" stroke="#fff" stroke-width="3.5"/><circle cx="2.4" cy="2.5" r="6.6" fill="none" stroke="#a00c14" stroke-width="2"/><path d="M2.4 -4.5 V9.5 M-4.6 2.5 H9.4" fill="none" stroke="#a00c14" stroke-width="1.6" /><rect x="8.5" y="8.5" width="2.5" height="2.5" fill="#16384a"/></g>
<g transform="translate(1308,86)"><path d="M-4.5 3 V-5.4 H-7 L-3 -10.7 L1 -5.4 H-1.5 V0" fill="#fff" stroke="#4c6a80" stroke-width="1.3" /><path d="M-0.5 1.5 H3.5 V-1 L8.5 3.5 L3.5 8 V5.5 H-0.5" fill="#fff" stroke="#4c6a80" stroke-width="1.3" /><path d="M-3 0 V9.5 L-0.6 7.2 L1.6 10.8 L3.2 9.9 L1 6.5 H4.4 Z" fill="#0c0c0c" stroke="#0c0c0c" stroke-width="0.6" /></g>
<g transform="translate(1343,86)"><path d="M-9.7 4.1 H9.7 M-2 -8.7 V4.1" fill="none" stroke="#0c0c0c" stroke-width="2.2" /><rect x="-2" y="-1.8" width="6.4" height="5.9" fill="none" stroke="#0c0c0c" stroke-width="1.6"/><rect x="-1.5" y="0.8" width="3.5" height="3" fill="#0c0c0c"/></g>
<g transform="translate(1375,86)"><path d="M-8.7 -6.8 H8.8 M-8.7 4.1 H8.8" fill="none" stroke="#0c0c0c" stroke-width="2" /><path d="M3.5 -9.6 L7.5 -6.8 L3.5 -4 M3.5 1.3 L7.5 4.1 L3.5 6.9" fill="none" stroke="#0c0c0c" stroke-width="1.5" /></g>
<g transform="translate(1406.5,86)"><path d="M-6.75 -8.7 V7.2 H8.8" fill="none" stroke="#2a5a60" stroke-width="1.8" /><rect x="-4.6" y="-0.5" width="4.8" height="4.4" fill="#b0b8c0" stroke="#5a7a84" stroke-width="1"/><rect x="-8.55" y="-10.200000000000001" width="3.6" height="3.6" fill="#1e6a3e" stroke="#0a2a18" stroke-width="0.6" transform="rotate(45 -6.75 -8.4)"/><rect x="-8.55" y="5.4" width="3.6" height="3.6" fill="#1e6a3e" stroke="#0a2a18" stroke-width="0.6" transform="rotate(45 -6.75 7.2)"/><rect x="7.000000000000001" y="5.4" width="3.6" height="3.6" fill="#1e6a3e" stroke="#0a2a18" stroke-width="0.6" transform="rotate(45 8.8 7.2)"/></g>
<g transform="translate(1448.6,86)"><path d="M-8.1 -12 V11 M1.2 -12 V11 M10.2 -12 V11" fill="none" stroke="#b8b8b8" stroke-width="1" /><path d="M-11 -6.8 H4 M-11 2.5 H12" fill="none" stroke="#b09898" stroke-width="0.8" /><rect x="-9.9" y="-8.6" width="3.6" height="3.6" fill="#1e6a3e" stroke="#0a2a18" stroke-width="0.6" transform="rotate(45 -8.1 -6.8)"/><rect x="-0.6000000000000001" y="-8.6" width="3.6" height="3.6" fill="#1e6a3e" stroke="#0a2a18" stroke-width="0.6" transform="rotate(45 1.2 -6.8)"/><rect x="-9.9" y="0.7" width="3.6" height="3.6" fill="#1e6a3e" stroke="#0a2a18" stroke-width="0.6" transform="rotate(45 -8.1 2.5)"/><rect x="-0.6000000000000001" y="0.7" width="3.6" height="3.6" fill="#1e6a3e" stroke="#0a2a18" stroke-width="0.6" transform="rotate(45 1.2 2.5)"/><rect x="8.399999999999999" y="0.7" width="3.6" height="3.6" fill="#1e6a3e" stroke="#0a2a18" stroke-width="0.6" transform="rotate(45 10.2 2.5)"/><path d="M5.5200000000000005 -6.6000000000000005 V-9.3 Q5.5200000000000005 -11.8 7.95 -11.8 Q10.379999999999999 -11.8 10.379999999999999 -9.3 V-6.6000000000000005" fill="none" stroke="#1a3a2a" stroke-width="1.6"/><rect x="3.9" y="-6.800000000000001" width="8.1" height="5.4" rx="1" fill="#2fb070" stroke="#153a26" stroke-width="1.2"/></g>
<g transform="translate(1482,86)"><path d="M-9 -10.7 L-2.3 -0.6 L-8 11.5" fill="none" stroke="#9a9a9a" stroke-width="1.1" stroke-dasharray="1.5 1"/><path d="M-8 -0.6 H3.5 M-2.3 -6.5 V5" fill="none" stroke="#0c0c0c" stroke-width="2.2" /><circle cx="-2.3" cy="-0.6" r="2.2" fill="#163a3a"/><path d="M6.119999999999999 -6.6000000000000005 V-9.3 Q6.119999999999999 -11.8 8.7 -11.8 Q11.28 -11.8 11.28 -9.3 V-6.6000000000000005" fill="none" stroke="#1a3a2a" stroke-width="1.6"/><rect x="4.4" y="-6.800000000000001" width="8.6" height="5.4" rx="1" fill="#2fb070" stroke="#153a26" stroke-width="1.2"/></g>
<g transform="translate(1514.6,86)"><path d="M-11 -9.9 H-3.2 M-11 -9.9 L-5 2.5 L-11 8.7 H4.2 L7.2 0.8" fill="none" stroke="#9a9a9a" stroke-width="0.9" /><rect x="-12.8" y="-11.700000000000001" width="3.6" height="3.6" fill="#1e6a3e" stroke="#0a2a18" stroke-width="0.6" transform="rotate(45 -11 -9.9)"/><rect x="-5.0" y="-11.700000000000001" width="3.6" height="3.6" fill="#1e6a3e" stroke="#0a2a18" stroke-width="0.6" transform="rotate(45 -3.2 -9.9)"/><rect x="-6.8" y="0.7" width="3.6" height="3.6" fill="#1e6a3e" stroke="#0a2a18" stroke-width="0.6" transform="rotate(45 -5 2.5)"/><rect x="-12.8" y="6.8999999999999995" width="3.6" height="3.6" fill="#1e6a3e" stroke="#0a2a18" stroke-width="0.6" transform="rotate(45 -11 8.7)"/><rect x="2.4000000000000004" y="6.8999999999999995" width="3.6" height="3.6" fill="#1e6a3e" stroke="#0a2a18" stroke-width="0.6" transform="rotate(45 4.2 8.7)"/><rect x="5.4" y="-1.0" width="3.6" height="3.6" fill="#1e6a3e" stroke="#0a2a18" stroke-width="0.6" transform="rotate(45 7.2 0.8)"/><path d="M6.02 -6.6000000000000005 V-9.3 Q6.02 -11.8 8.6 -11.8 Q11.18 -11.8 11.18 -9.3 V-6.6000000000000005" fill="none" stroke="#1a3a2a" stroke-width="1.6"/><rect x="4.3" y="-6.800000000000001" width="8.600000000000001" height="5.4" rx="1" fill="#2fb070" stroke="#153a26" stroke-width="1.2"/></g>
<g transform="translate(1555.5,86)"><path d="M-11.3 -3.7 H12.3" fill="none" stroke="#1a1010" stroke-width="2" /><path d="M-10.5 7.6 L-3.5 0.6" fill="none" stroke="#0c0c0c" stroke-width="1.4" /><path d="M-1.3 -1.6 L-6.5 0.2 L-3.2 3.4 Z" fill="#0c0c0c" stroke="none" stroke-width="0" /><path d="M0 -8.2 L3 -4.1 L0 0 L-3 -4.1 Z" fill="#8a0808" stroke="none" stroke-width="0" /></g>
<g transform="translate(1589,86)"><path d="M-11.3 -3.7 H12.3" fill="none" stroke="#1a1010" stroke-width="2" /><path d="M0 -4 V10" fill="none" stroke="#0c0c0c" stroke-width="1.4" /><path d="M0 -0.5 L-2.6 4 H2.6 Z" fill="#0c0c0c" stroke="none" stroke-width="0" /><path d="M0 -8.2 L3 -4.1 L0 0 L-3 -4.1 Z" fill="#8a0808" stroke="none" stroke-width="0" /></g>
<g transform="translate(1649,86)"><defs><radialGradient id="capg" cx="0.5" cy="0.5" r="0.6"><stop offset="0" stop-color="#ffff30"/><stop offset="0.7" stop-color="#e8e820"/><stop offset="1" stop-color="#b8b860"/></radialGradient></defs><rect x="-8.1" y="-11.6" width="16.7" height="22.2" rx="6" fill="#8a8c84" stroke="#3a3c38" stroke-width="1"/><rect x="-5.6" y="-8.8" width="11.5" height="16.8" fill="url(#capg)"/></g>
<g transform="translate(1682.6,86)"><path d="M-10.6 -0.2 L4.9 -11.5 M-7.8 10 V-2.2 M-3 6 V-5.7 M2 2 V-9.5" fill="none" stroke="#1c4a5c" stroke-width="1.4" /><path d="M-10.5 10.8 H-7 V7 H-3.5 V3 H0 V-1 H3.5 V-5 H7 V-9 H11.5" fill="none" stroke="#1e1a10" stroke-width="3.6" /><path d="M-11.2 10 H-7.5 V6.2 H-4 V2.2 H-0.5 V-1.8 H3 V-5.8 H6.5 V-9.8 H11" fill="none" stroke="#f4f000" stroke-width="2" /></g>
<g transform="translate(1716,86)"><path d="M-11.8 5 Q-10 -7.6 0 -7.6 Q10 -7.6 11.9 5 Z" fill="#9aa090" stroke="#f0e800" stroke-width="1.8" /><path d="M-7 5 Q-5 -4 -2 -6.5 M7 5 Q5 -4 2 -6.5 M-2.5 5 V-6 M2.5 5 V-6" fill="none" stroke="#101010" stroke-width="1.6" /><path d="M-11.8 5.4 H11.9" fill="none" stroke="#f0e800" stroke-width="2" /><path d="M-11.8 7.3 H11.9" fill="none" stroke="#101010" stroke-width="1.6" /></g>
<g transform="translate(1749,86)"><path d="M-3.5 -11.5 H0 L4 2.5 V5.5 H8.4 V9 H0.8 V12 H-0.8 V9 H-7.2 V5.5 H-3.5 Z" fill="#7c7c72" stroke="#f0e800" stroke-width="1.8" /><path d="M-1.5 -9 V5" fill="none" stroke="#555" stroke-width="1" /></g>
<g transform="translate(1783,86)"><path d="M3 -10.5 H8.5 V10.5 H-8.5 V3.5 H3 Z" fill="#7a7a72" stroke="#f0e800" stroke-width="2" /></g>
<g transform="translate(1814.5,86)"><path d="M-10.1 -9.1 H5.5 L11.3 -3.5 V1.8 L5.5 7.6 H-10.1 Z" fill="#2a72b8" stroke="#e8e040" stroke-width="2.2" /><path d="M-8 -4 L-5 -2 L-8 0 L-5 2 L-8 4" fill="none" stroke="#5a9ad8" stroke-width="0.8" /></g>
<g transform="translate(1848.5,86)"><path d="M-9.9 -9.9 V8.7 H11.1" fill="none" stroke="#0c0c0c" stroke-width="1.9" /><path d="M-12.2 -6.9 L-9.9 -10.4 L-7.6000000000000005 -6.9 M8.1 6.3999999999999995 L11.6 8.7 L8.1 11.0" fill="none" stroke="#0c0c0c" stroke-width="1.6" /><path d="M-9.1 7.2 L6.4 -8.7" fill="none" stroke="#2a3a5a" stroke-width="1.1" /><path d="M6.4 -11.6 L9.3 -8.7 L6.4 -5.8 L3.5 -8.7 Z" fill="#ff1010" stroke="none" stroke-width="0" /><text x="4.3" y="5.6" font-family="Liberation Sans" font-size="10.5" fill="#4a5048">P</text></g>
<g transform="translate(1881,86)"><path d="M-11.4 -9.9 V8.7 H11.5" fill="none" stroke="#0c0c0c" stroke-width="1.9" /><path d="M-13.7 -6.9 L-11.4 -10.4 L-9.100000000000001 -6.9 M8.5 6.3999999999999995 L12.0 8.7 L8.5 11.0" fill="none" stroke="#0c0c0c" stroke-width="1.6" /><path d="M-10.4 7.5 L6.9 -8.4" fill="none" stroke="#b0b0b0" stroke-width="0.9" /><path d="M6.9 -11 L9.5 -8.4 L6.9 -5.8 L4.3 -8.4 Z" fill="#0c0c0c" stroke="none" stroke-width="0" /><text x="3.8" y="4.5" font-family="Liberation Sans" font-weight="bold" font-size="12.5" fill="#0c0c0c">?</text></g>
<g transform="translate(1913.5,86)"><path d="M-3.3 -10.8 H10.3 L3.7 -1.5 H6 L-8 10.5 L-4 1.6 H-6.8 L-3.3 -5 Z" fill="#6a6a40" stroke="none" stroke-width="0" /><path d="M-4.3 -11.8 H9.3 L2.7 -2.5 H5 L-9 9.5 L-5 0.6 H-7.8 L-4.3 -6 Z" fill="#eaea78" stroke="#0c0c0c" stroke-width="1.4" /></g>
<g transform="translate(1955.5,86)"><path d="M-10 -10.3 H11" fill="none" stroke="#8a8a8a" stroke-width="1.2" stroke-dasharray="1.5 1.5"/><path d="M-9.8 -6.5 V8.7 M-1.7 -6.5 V8.7 M8.8 -6.5 V2 M-10 -5.5 H9" fill="none" stroke="#9a9a8a" stroke-width="1.4" /><path d="M-10.5 2.5 H1.5 M-9.8 2.5 V8.7 M-1.7 2.5 V8.7" fill="none" stroke="#1a1a1a" stroke-width="1.8" /><circle cx="5.4" cy="4.5" r="4.2" fill="#d8d0b0" stroke="#ee1010" stroke-width="2.6"/></g>
<g transform="translate(1987.5,86)"><path d="M-11.5 -9.3 H10.5 M-10.5 -9.3 V9.5 M-0.5 -9.3 V9.5 M9.5 -9.3 V9.5 M-11.5 -3.5 H10.5" fill="none" stroke="#9a9a9a" stroke-width="1.8" /><path d="M-11.5 3 H10.5 M-10.5 3 V10 M-0.5 3 V10 M9.5 3 V10" fill="none" stroke="#0e0c0c" stroke-width="2" /></g>
<g transform="translate(25.5,121.5)"><path d="M4.4 -6 V11.5 M0 4.9 H11" fill="none" stroke="#1f5e98" stroke-width="2.2" /><circle cx="4.4" cy="-6" r="4.6" fill="#b4c8d8" stroke="#1f5e98" stroke-width="1.8"/><circle cx="-4.9" cy="4.9" r="4.6" fill="#b4c8d8" stroke="#1f5e98" stroke-width="1.8"/></g>
<g transform="translate(59,121.5)"><path d="M-7 -3 L11 -11 V4 L-6 11 Z" fill="#a8cbe2" stroke="#335a78" stroke-width="1" /><path d="M-11 -3 L-7 -3 L-6 11 L-9 8 Z" fill="#1c3a52" stroke="#1c3a52" stroke-width="1" /><path d="M-5 0 L10 -7 M-5 4 L10 -3 M-5 8 L10 1 M-1 -4 V9 M5 -8 V5" fill="none" stroke="#e6f0f8" stroke-width="0.9" /></g>
<g transform="translate(92,121.5)"><path d="M-10.5 4.5 V-8 L-8 -8.5" fill="none" stroke="#1f3a50" stroke-width="1.6" /><path d="M-8 -8.5 Q-2 -8 2 3" fill="none" stroke="#1f3a50" stroke-width="0.9" stroke-dasharray="1.5 1"/><rect x="-12.5" y="2.5" width="3.5" height="4" fill="#1f3a50"/><path d="M3 4.5 H11 M2.5 2 V7 M11.5 2 V7" fill="none" stroke="#1f3a50" stroke-width="2" /></g>
<g transform="translate(124.5,121.5)"><path d="M-8.5 -10.5 H8.5 V-8.5 Q4 -6 4 -2 V2 Q4 6 8.5 8.5 V10.5 H-8.5 V8.5 Q-4 6 -4 2 V-2 Q-4 -6 -8.5 -8.5 Z" fill="#9cb8c8" stroke="#16364a" stroke-width="2" /><path d="M0 -7 V7" fill="none" stroke="#e0eef6" stroke-width="2" /><path d="M-2.5 -6 V6" fill="none" stroke="#4a6a7e" stroke-width="1" /></g>
<g transform="translate(158,121.5)"><rect x="-11.5" y="-2.5" width="23" height="5.5" fill="#c8dcea" stroke="#6c8496" stroke-width="1.5"/><path d="M-9 3 L-12 9 H-5 Z M8 3 L4 9 H11 Z" fill="#b8ccd8" stroke="#6c8496" stroke-width="1.2" /><path d="M0 -11 V-3 M-3 -6 L0 -3 L3 -6" fill="none" stroke="#6c8496" stroke-width="1.4" /><text x="3" y="-5" font-family="Liberation Sans" font-weight="bold" font-size="8" fill="#6c8496">N</text></g>
<g transform="translate(192.5,121.5)"><path d="M-11 11 V0 L10 -8 V4 L-6 11 Z" fill="#88aecb" stroke="#6a8fac" stroke-width="1" /><path d="M-7 1 V-6 M1 -3 V-9 M8 -6 V-12" fill="none" stroke="#4a6e88" stroke-width="2" /></g>
<g transform="translate(224,121.5)"><path d="M-12 1 L2.4 -6.4 L11.7 -2.1 L-3.4 7.2 Z" fill="#90b6cc" stroke="#2a4c62" stroke-width="1.5" /><path d="M-11 2 L-3 8 L11 -1" fill="none" stroke="#0e2a3e" stroke-width="2" /><path d="M2.4 -12 V-6 M-12 -3 V5 M11.7 -5 V3 M-3.4 6 V13" fill="none" stroke="#40627a" stroke-width="1.2" /></g>
<g transform="translate(256.5,121.5)"><path d="M-11.5 -10 H-1 V-2 H11 V9.5 H-11.5 Z" fill="#aec6dc" stroke="#6d8ea8" stroke-width="1" /><rect x="-11.5" y="7" width="23" height="3" fill="#0a2a40"/></g>
<g transform="translate(289,121.5)"><rect x="-11" y="-10.5" width="23" height="4.5" fill="#0d3a58"/><rect x="-9.5" y="-9" width="20" height="1.2" fill="#7aa4c0"/><rect x="-9" y="-6" width="4" height="17" fill="#0d3a58"/><rect x="-2" y="-6" width="4" height="17" fill="#0d3a58"/><rect x="5.7" y="-6" width="4" height="17" fill="#0d3a58"/></g>
<g transform="translate(324,121.5)"><path d="M-12 11 V7 L-5 2 V-6 L3 -11 L10 -6 L3 -3 V2 Z" fill="#5e8aa8" stroke="#4b7490" stroke-width="0.8" /><path d="M3 -11 L10 -6 V2 L12 5 V8 L-2 11 H-12 L-5 7 V-1 Z" fill="#a8c8de" stroke="#5a7e98" stroke-width="0.8" /><path d="M-12 11 H-2 L-5 7 V-3" fill="none" stroke="#3a6482" stroke-width="1" /></g>
<g transform="translate(355,121.5)"><path d="M-2 -10 H5 V2 L11 6 L1 11 L-9 7 L-2 2 Z" fill="#9cc0da" stroke="#4b7490" stroke-width="1" /><path d="M-9 7 L1 11 V13 L-9 9 Z" fill="#5a84a2" stroke="none" stroke-width="0" /><path d="M1 -10 V3" fill="none" stroke="#2a5070" stroke-width="1.5" /></g>
<g transform="translate(389,121.5)"><path d="M-11 10 V5 L-7 0 H-3 L0 5 V10 Z M1 10 V5 L5 0 H9 L12 5 V10 Z" fill="#a8c8e2" stroke="#6a90aa" stroke-width="1.2" /><rect x="-6" y="-3" width="13" height="4" fill="#385a76" stroke="#24425a" stroke-width="1"/></g>
<g transform="translate(430,121.5)"><path d="M-9 11 V-1 L-1 -10 V11 Z" fill="#b8b8b0" stroke="none" stroke-width="0" /><path d="M-10 11 V-1 L-1 -10 V11 M0 0 L9 -6 V11" fill="none" stroke="#1e1a10" stroke-width="3.8" stroke-linejoin="miter" stroke-linecap="square"/><path d="M-10 11 V-1 L-1 -10 V11 M0 0 L9 -6 V11" fill="none" stroke="#efe35a" stroke-width="2.0" stroke-linejoin="miter" stroke-linecap="square"/></g>
<g transform="translate(463.5,121.5)"><path d="M-11 -8 H8 L0 1" fill="none" stroke="#1e1a10" stroke-width="3.8" stroke-linejoin="miter" stroke-linecap="square"/><path d="M-11 -8 H8 L0 1" fill="none" stroke="#efe35a" stroke-width="2.0" stroke-linejoin="miter" stroke-linecap="square"/><path d="M-11 1 H11 L3 10 H-11 M-11 5 H7" fill="none" stroke="#1e1a10" stroke-width="3.4000000000000004" stroke-linejoin="miter" stroke-linecap="square"/><path d="M-11 1 H11 L3 10 H-11 M-11 5 H7" fill="none" stroke="#efe35a" stroke-width="1.6" stroke-linejoin="miter" stroke-linecap="square"/></g>
<g transform="translate(496,121.5)"><rect x="-11.5" y="-11.5" width="23" height="22.5" fill="#a8a8a8" stroke="#555" stroke-width="1"/><path d="M-9 -9.5 H9 M-9 9 H9 M-9.5 -9 V9 M9.5 -9 V9" fill="none" stroke="#1e1a10" stroke-width="3.4000000000000004" stroke-linejoin="miter" stroke-linecap="square"/><path d="M-9 -9.5 H9 M-9 9 H9 M-9.5 -9 V9 M9.5 -9 V9" fill="none" stroke="#efe35a" stroke-width="1.6" stroke-linejoin="miter" stroke-linecap="square"/><rect x="-7" y="-5.5" width="14" height="3" fill="#0e1a12"/><rect x="-7" y="0.8" width="14" height="3" fill="#0e1a12"/></g>
<g transform="translate(529,121.5)"><rect x="-11.5" y="-11.5" width="23" height="22.5" fill="#a8a8a8" stroke="#555" stroke-width="1"/><path d="M-9 -9.5 H9 M-9.5 -9 V9 M9.5 -9 V9" fill="none" stroke="#1e1a10" stroke-width="3.4000000000000004" stroke-linejoin="miter" stroke-linecap="square"/><path d="M-9 -9.5 H9 M-9.5 -9 V9 M9.5 -9 V9" fill="none" stroke="#efe35a" stroke-width="1.6" stroke-linejoin="miter" stroke-linecap="square"/><path d="M-7 -7 L7 9 M7 -7 L-7 9" fill="none" stroke="#1e1a10" stroke-width="3.6" stroke-linejoin="miter" stroke-linecap="square"/><path d="M-7 -7 L7 9 M7 -7 L-7 9" fill="none" stroke="#efe35a" stroke-width="1.8" stroke-linejoin="miter" stroke-linecap="square"/><rect x="-3" y="-2" width="6" height="6" fill="#0e1a12"/></g>
<g transform="translate(562,121.5)"><path d="M-11.5 -7 H11.5 V-1 L2 7.5 H-2 L-11.5 -1 Z" fill="#a8a8a8" stroke="#111" stroke-width="1.3" /><path d="M-10 -1 L-4 -1 L-1 6 H1 L4 -1 H10" fill="none" stroke="#1e1a10" stroke-width="3.2" stroke-linejoin="miter" stroke-linecap="square"/><path d="M-10 -1 L-4 -1 L-1 6 H1 L4 -1 H10" fill="none" stroke="#efe35a" stroke-width="1.4" stroke-linejoin="miter" stroke-linecap="square"/><path d="M-2.5 -3 H2.5 M0 -3 V6" fill="none" stroke="#111" stroke-width="2.6" /></g>
<g transform="translate(595,121.5)"><rect x="-11.5" y="-5.5" width="23" height="13" fill="#a8a8a8" stroke="#111" stroke-width="1.4"/><path d="M-10.5 5.5 H10.5" fill="none" stroke="#efe35a" stroke-width="2.2" /></g>
<g transform="translate(628,121.5)"><rect x="-11.5" y="2.5" width="23" height="5.5" fill="#4a78a6" stroke="#0e1a22" stroke-width="1.6"/></g>
<g transform="translate(661,121.5)"><path d="M-11.5 -7.5 H11.5 M-11.5 7 H11.5" fill="none" stroke="#1e1a10" stroke-width="3.6" stroke-linejoin="miter" stroke-linecap="square"/><path d="M-11.5 -7.5 H11.5 M-11.5 7 H11.5" fill="none" stroke="#efe35a" stroke-width="1.8" stroke-linejoin="miter" stroke-linecap="square"/><path d="M-11 -5.5 H11 M-11 5 H11" fill="none" stroke="#333" stroke-width="0.8" /><path d="M-10 4 L-5 -4 L0 4 L5 -4 L10 4" fill="none" stroke="#1e1a10" stroke-width="3.0" stroke-linejoin="miter" stroke-linecap="square"/><path d="M-10 4 L-5 -4 L0 4 L5 -4 L10 4" fill="none" stroke="#efe35a" stroke-width="1.2" stroke-linejoin="miter" stroke-linecap="square"/></g>
<g transform="translate(694,121.5)"><path d="M-11 -1 L-1 -11 L11 1 M-11 1 L1 11 M11 -11 L1 -1 M-11 11 L-9 9 M11 11 L9 9" fill="none" stroke="#1e1a10" stroke-width="3.1" stroke-linejoin="miter" stroke-linecap="square"/><path d="M-11 -1 L-1 -11 L11 1 M-11 1 L1 11 M11 -11 L1 -1 M-11 11 L-9 9 M11 11 L9 9" fill="none" stroke="#efe35a" stroke-width="1.3" stroke-linejoin="miter" stroke-linecap="square"/><path d="M-11 -5 H11 M-11 4 H11 M-4 -11 V11 M5 -11 V11" fill="none" stroke="#111" stroke-width="1.3" /><circle cx="5" cy="-5" r="2.2" fill="#111"/><circle cx="-4" cy="4" r="2.2" fill="#111"/></g>
<g transform="translate(727,121.5)"><rect x="-11" y="-11" width="4" height="22" fill="#a8a8a8"/><path d="M-11.5 -11 V11 M-7 -11 V11" fill="none" stroke="#111" stroke-width="1.4" /><path d="M-3 -11 H7 V-8 H3.5 V-5 H7 V-2 H-3 V-5 H0.5 V-8 H-3 Z" fill="#9a9a9a" stroke="#111" stroke-width="1.2"/><path d="M-4 11 V2 L10 0 Z" fill="#efe35a" stroke="#111" stroke-width="1.3" /></g>
<g transform="translate(760,121.5)"><path d="M-11.5 -10 V11 M10.5 -10 V11" fill="none" stroke="#999" stroke-width="1.2" /><path d="M-10 -9 H10 M-10 -3 H10 M-10 3 H10 M-10 9 H10" fill="none" stroke="#1e1a10" stroke-width="3.3" stroke-linejoin="miter" stroke-linecap="square"/><path d="M-10 -9 H10 M-10 -3 H10 M-10 3 H10 M-10 9 H10" fill="none" stroke="#efe35a" stroke-width="1.5" stroke-linejoin="miter" stroke-linecap="square"/></g>
<g transform="translate(793,121.5)"><rect x="-11" y="-10" width="22" height="21" fill="none" stroke="#aaa" stroke-width="1.2"/><path d="M-11 -3 H11 M-11 4 H11" fill="none" stroke="#bbb" stroke-width="1" /><path d="M-10 -10 L-4 -3 L-5 2 V11 M10 -10 L4 -3 L5 2 V11" fill="none" stroke="#1e1a10" stroke-width="3.2" stroke-linejoin="miter" stroke-linecap="square"/><path d="M-10 -10 L-4 -3 L-5 2 V11 M10 -10 L4 -3 L5 2 V11" fill="none" stroke="#efe35a" stroke-width="1.4" stroke-linejoin="miter" stroke-linecap="square"/><rect x="-11" y="-9" width="2" height="2" fill="#d02020"/><rect x="-11" y="-1" width="2" height="2" fill="#d02020"/><rect x="-11" y="7" width="2" height="2" fill="#d02020"/></g>
<g transform="translate(825.5,121.5)"><path d="M-11 -10 H11 V11 L8 8 L5 11 L2 8 L-1 11 L-4 8 L-7 11 L-11 8 Z" fill="#b0a870" stroke="#222" stroke-width="1.3" /><path d="M-7 -9 V8 M-3 -9 V8 M1 -9 V8 M5 -9 V8" fill="none" stroke="#1e1a10" stroke-width="2.8" stroke-linejoin="miter" stroke-linecap="square"/><path d="M-7 -9 V8 M-3 -9 V8 M1 -9 V8 M5 -9 V8" fill="none" stroke="#efe35a" stroke-width="1.0" stroke-linejoin="miter" stroke-linecap="square"/></g>
<g transform="translate(866,121.5)"><path d="M-10 9 V-2 L0 -10 L10 -2 V9" fill="none" stroke="#111" stroke-width="3.2" /><path d="M-10 9 V-2 L0 -10 L10 -2 V9" fill="none" stroke="#efe35a" stroke-width="1.4" /><rect x="-12" y="8" width="4" height="4" fill="#111"/><rect x="8" y="8" width="4" height="4" fill="#111"/></g>
<g transform="translate(899,121.5)"><path d="M-10 -11 V11 M10 -11 V11 M-12 -9 H12 M-12 10 H12" fill="none" stroke="#111" stroke-width="2" /><path d="M-8 -7 L8 8 M8 -7 L-8 8" fill="none" stroke="#1e1a10" stroke-width="3.1" stroke-linejoin="miter" stroke-linecap="square"/><path d="M-8 -7 L8 8 M8 -7 L-8 8" fill="none" stroke="#efe35a" stroke-width="1.3" stroke-linejoin="miter" stroke-linecap="square"/></g>
<g transform="translate(933,121.5)"><rect x="-10" y="-11" width="5" height="22" fill="#a0a0a0"/><path d="M-10.5 -11 V11 M-5 -11 V11" fill="none" stroke="#222" stroke-width="1.3" /><path d="M-3 -6 H8 V6 H-3 Z" fill="none" stroke="#1e1a10" stroke-width="3.4000000000000004" stroke-linejoin="miter" stroke-linecap="square"/><path d="M-3 -6 H8 V6 H-3 Z" fill="none" stroke="#efe35a" stroke-width="1.6" stroke-linejoin="miter" stroke-linecap="square"/><rect x="-7" y="-4" width="2" height="2" fill="#222"/><rect x="-7" y="2" width="2" height="2" fill="#222"/></g>
<g transform="translate(974,121.5)"><path d="M-10.5 -4.8 H11.7 M-8.5 -4.8 V6 M0.8 -4.8 V2.6 M9.7 -4.8 V7.6" fill="none" stroke="#2b5470" stroke-width="1.8" stroke-dasharray="2.2 0.8"/><circle cx="-4.6" cy="-9.1" r="1.7" fill="#2b5470"/><circle cx="5.8" cy="-9.1" r="1.7" fill="#2b5470"/><rect x="-10.5" y="4.1" width="4" height="4" fill="#2b5470" transform="rotate(45 -8.5 6.1)"/><rect x="-1.2" y="0.6000000000000001" width="4" height="4" fill="#2b5470" transform="rotate(45 0.8 2.6)"/><rect x="7.699999999999999" y="5.6" width="4" height="4" fill="#2b5470" transform="rotate(45 9.7 7.6)"/><rect x="-12.5" y="-6.8" width="4" height="4" fill="#2b5470" transform="rotate(45 -10.5 -4.8)"/><rect x="7.699999999999999" y="-6.8" width="4" height="4" fill="#2b5470" transform="rotate(45 9.7 -4.8)"/></g>
<g transform="translate(1007,121.5)"><path d="M-8.9 -8 L-6.5 -10.2 H8.9 V9.5 L6.5 11.1 H-8.9 Z" fill="#6c9cc0" stroke="#1e4058" stroke-width="1.4" /><rect x="-8.9" y="-8" width="15.4" height="19.1" fill="#9cc0d6" stroke="#1e4058" stroke-width="1.4"/><rect x="-5.4" y="-3.6" width="8.1" height="3.4" fill="#2a5070"/></g>
<g transform="translate(1038.5,121.5)"><path d="M-7 -10.6 V9.6 M0.4 -10.6 V9.6 M8.5 -10.6 V9.6 M-10.1 -7.9 H10.4 M-10.1 -0.5 H10.4 M-10.1 7.2 H10.4" fill="none" stroke="#1a3e58" stroke-width="3.2" /><path d="M-7 -10.6 V9.6 M0.4 -10.6 V9.6 M8.5 -10.6 V9.6 M-10.1 -7.9 H10.4 M-10.1 -0.5 H10.4 M-10.1 7.2 H10.4" fill="none" stroke="#5a9ac8" stroke-width="1.6" /></g>
<g transform="translate(1072,121.5)"><path d="M-10 -1.5 L3.5 -10.5 L9.5 -3 L-2.5 9.5 Z" fill="#8cb4d4" stroke="#4a7290" stroke-width="0.8" /><path d="M3.5 -10.5 L9.5 -3 L8 -0.5 L-3 10 L-2.5 9.5 Z" fill="#1e3a52" stroke="none" stroke-width="0" /><path d="M-10 -1.5 L-2.5 9.5 L-6 9 L-9.5 3 Z" fill="#b8d4ea" stroke="none" stroke-width="0" /><path d="M-4 -4 L6 -9 M-4 0 L6 -5" fill="none" stroke="#a0c4e0" stroke-width="0.8" /></g>
<g transform="translate(1106,121.5)"><path d="M-12 6.8 V4.5 L-6.5 -3 Q0 -7 6.5 -3 L12 4.5 V6.8 Z" fill="#9ab8cc" stroke="#183a52" stroke-width="1.8" /><path d="M-6 6 V-1.5 M-2.5 6 V-4.5 M2.5 6 V-4.5 M6 6 V-1.5 M-9 6 L-5 -2 M9 6 L5 -2" fill="none" stroke="#e0eef8" stroke-width="1.2" /></g>
<g transform="translate(1136.5,121.5)"><path d="M-9 4 L-2.5 -9 Q3 -11.5 8 -8.5 Q11 -4 9.5 2 L7 6 Z" fill="#a4c6e0" stroke="#1c4058" stroke-width="1.6" /><path d="M-11.5 11 L-5 2 M-5 11 L0 3 M0.5 -5.5 L3.5 -8.5 M2 -8 V-3" fill="none" stroke="#1c4058" stroke-width="1.6" stroke-dasharray="2 1"/></g>
<g transform="translate(1172,121.5)"><path d="M-11.6 9.6 L11.7 -10.6 V-9 L-10 11 Z" fill="#a8cce8" stroke="none" stroke-width="0" /><path d="M-11.6 7 H-7.5 V3 H-4 V-1 H0 V-5 H3.5 V-9 H7 M-10.5 11 L11.7 -9.5" fill="none" stroke="#1c3e56" stroke-width="2" /></g>
<g transform="translate(1206,121.5)"><path d="M-2.8 -9.9 H2 L6.5 4.8 V6.8 H8 V10 H2 V11.1 H-2 V10 H-8.3 V6.8 H-2.8 Z" fill="#c8d8e4" stroke="#24506c" stroke-width="1.8" /><path d="M1 -8 L5 4" fill="none" stroke="#24506c" stroke-width="1" /></g>
<g transform="translate(1238.5,121.5)"><path d="M2.8 -9.9 H8.5 V11.1 H-7.8 V3 H2.8 Z" fill="none" stroke="#24506c" stroke-width="2.2" /><path d="M5.5 -7.5 V8.5 H-5.5 V5.5" fill="none" stroke="#24506c" stroke-width="0.8" /></g>
<g transform="translate(1271,121.5)"><path d="M-12 -5 V9.6 H10 V-1" fill="none" stroke="#1c3a52" stroke-width="1.6" /><path d="M-11 9 V-2 L-8 -5 L-5 -2 L-2 -5 L1 -2 L4 -5 L7 -2 L10 -5 V9 Z" fill="#5a9ccc" stroke="none" stroke-width="0" /><path d="M-11 1 L-8 -2 L-5 1 L-2 -2 L1 1 L4 -2 L7 1 L10 -2" fill="none" stroke="#2e78b8" stroke-width="1" /><rect x="7" y="-9.9" width="4.7" height="19" fill="#0a0a18"/><rect x="8.5" y="-8.3" width="2" height="3" fill="#fff"/></g>
<g transform="translate(1304,121.5)"><rect x="-10" y="-9.9" width="20.2" height="21" fill="#c0ccd6" stroke="#1a1414" stroke-width="2.2"/><path d="M-9 -7 Q-5 -2 -1 -6 Q3 -3 9 -5 M-9 2 Q-3 -3 3 1 Q7 -1 9 0 M-6 11 Q0 5 9 8" fill="none" stroke="#203848" stroke-width="1.2" /><circle cx="-4" cy="-6" r="0.6" fill="#5a88a8"/><circle cx="2" cy="-4" r="0.6" fill="#5a88a8"/><circle cx="5" cy="3" r="0.6" fill="#5a88a8"/><circle cx="-3" cy="5" r="0.6" fill="#5a88a8"/><circle cx="6" cy="7" r="0.6" fill="#5a88a8"/></g>
<g transform="translate(1344,121.5)"><rect x="-9" y="-9.9" width="18.8" height="19.4" fill="#f2eccc" stroke="#3c6480" stroke-width="1.8"/><path d="M-8 9 L-2.5 2 L2 6.5 L4.5 4.5 L8.8 9 Z" fill="#4a7090" stroke="none" stroke-width="0" /><circle cx="4" cy="-3.5" r="2.4" fill="#fff" stroke="#4a7090" stroke-width="1.4"/></g>
<g transform="translate(1377.5,121.5)"><text x="0" y="9.6" text-anchor="middle" font-family="Liberation Serif" font-weight="bold" font-size="22" fill="#1e4a6a">A</text></g>
<g transform="translate(1410.5,121.5)"><path d="M-10.5 -1.3 L-2.7 -8.3 L1.2 4.1 L5.8 1 L10.9 -0.5" fill="none" stroke="#24506e" stroke-width="1.6" /></g>
<g transform="translate(1444,121.5)"><path d="M-8.3 6.1 Q-4.5 -3.5 -2.1 -4.8 Q4 -9.5 11.9 -9.5" fill="none" stroke="#24506e" stroke-width="1.4" stroke-dasharray="2.2 0.8"/><rect x="-9.9" y="4.5" width="3.2" height="3.2" fill="#c8dce8" stroke="#24506e" stroke-width="1" transform="rotate(45 -8.3 6.1)"/><rect x="-3.7" y="-6.4" width="3.2" height="3.2" fill="#c8dce8" stroke="#24506e" stroke-width="1" transform="rotate(45 -2.1 -4.8)"/><rect x="10.3" y="-11.1" width="3.2" height="3.2" fill="#c8dce8" stroke="#24506e" stroke-width="1" transform="rotate(45 11.9 -9.5)"/></g>
<g transform="translate(1477,121.5)"><circle cx="-0.5" cy="0.2" r="9.8" fill="none" stroke="#24506e" stroke-width="1.7" stroke-dasharray="3 0.8"/></g>
<g transform="translate(1510,121.5)"><path d="M-9 -6 Q-9 -8.5 -6.5 -8 Q-4 -9.5 -1.5 -8 Q1 -9.5 3.5 -8 Q6 -9.5 8.5 -8 Q11 -8.5 10.5 -5.5 Q12 -3 10.5 -0.5 Q12 2.5 10.5 5 Q11 8.5 8 8 Q5.5 9.5 3 8 Q0.5 9.5 -2 8 Q-4.5 9.5 -7 8 Q-10 8.5 -9.5 5.5 Q-11 2.5 -9.5 0 Q-11 -3 -9 -6 Z" fill="#f8fcff" stroke="#0c0c0c" stroke-width="1.6" /></g>
<g transform="translate(1543,121.5)"><path d="M-11.8 9.2 V1.5 L-8 1.5 L-6 -9.9 L12 9.2 Z" fill="#5a8cb0" stroke="#0c0c0c" stroke-width="1.6" /><path d="M-11.8 1.5 H-1 L6 9.2 H-11.8 Z" fill="#3e6890" stroke="#0c0c0c" stroke-width="1.4" /><path d="M-6 -9.9 L-9.5 -6.5 L9.5 9" fill="none" stroke="#0c0c0c" stroke-width="1.2" /></g>
<g transform="translate(1576,121.5)"><path d="M-11.7 0.5 Q-9.5 -3.6 -7 0 Q-4.5 4.1 -2.4 0 Q-0.5 -3.6 2 0 Q4.5 4.1 6.5 0.5 Q9 -3.6 11.6 2" fill="none" stroke="#24506e" stroke-width="1.6" /><rect x="-10.0" y="-8.200000000000001" width="3.6" height="3.6" fill="#a8c8dc" stroke="#24506e" stroke-width="1" transform="rotate(45 -8.2 -6.4)"/><rect x="1.9999999999999998" y="-8.200000000000001" width="3.6" height="3.6" fill="#a8c8dc" stroke="#24506e" stroke-width="1" transform="rotate(45 3.8 -6.4)"/><rect x="-4.2" y="7.8" width="3.6" height="3.6" fill="#a8c8dc" stroke="#24506e" stroke-width="1" transform="rotate(45 -2.4 9.6)"/></g>
<g transform="translate(1607,121.5)"><path d="M-9.7 2.6 H-3 M-6.35 -0.7 V6" fill="none" stroke="#24506e" stroke-width="2" /><path d="M-1.5 -3.5 Q-0.5 -7 2 -7 Q4.5 -7 4.5 -4 Q4.5 -1 -1 5.5 H8.5 V-5.5" fill="none" stroke="#24506e" stroke-width="1.8" /></g>
<g transform="translate(1650,121.5)"><path d="M-11.6 -0.5 H2.8 L11 6.9 H-4.5 Z" fill="#fff" stroke="#0e0a0a" stroke-width="1.8" /><path d="M-11.6 -4.8 H2.8 L11 2.6000000000000005 H-4.5 Z" fill="#fff" stroke="#0e0a0a" stroke-width="1.8" /><path d="M-11.6 -9.9 H2.8 L11 -2.5 H-4.5 Z" fill="#fff" stroke="#0e0a0a" stroke-width="1.8" /></g>
<g transform="translate(1682.6,121.5)"><path d="M-11.6 -0.5 H2.8 L11 6.9 H-4.5 Z" fill="#b0cfe8" stroke="#0e0a0a" stroke-width="1.8" /><path d="M-11.6 -4.8 H2.8 L11 2.6000000000000005 H-4.5 Z" fill="#fff" stroke="#0e0a0a" stroke-width="1.8" /><path d="M-11.6 -9.9 H2.8 L11 -2.5 H-4.5 Z" fill="#fff" stroke="#0e0a0a" stroke-width="1.8" /><path d="M-10.5 6 L-10.5 11 L-7 8.5 Z" fill="#0e0a0a" stroke="none" stroke-width="0" /></g>
<g transform="translate(1875.5,121.5)"><path d="M-9.4 -0.5999999999999996 L-7.65 -5.6 L-5.9 -0.5999999999999996 Z" fill="#2e5a7a" stroke="none" stroke-width="0" /><rect x="-8.35" y="-3.3999999999999995" width="1.4" height="1.4" fill="#fff"/><rect x="-11.4" y="0.40000000000000036" width="7.5" height="1.8" fill="#2e5a7a"/><path d="M-4 2.6 H0" fill="none" stroke="#2e5a7a" stroke-width="1.8" /><path d="M1.4 2.5 L5.800000000000001 -2.5 L10.200000000000001 2.5 Z" fill="#2e5a7a" stroke="none" stroke-width="0" /><rect x="5.1000000000000005" y="-0.2999999999999998" width="1.4" height="1.4" fill="#fff"/><rect x="-0.6" y="3.5" width="12.8" height="1.8" fill="#2e5a7a"/></g>
<g transform="translate(1909,121.5)"><path d="M-9 -3 Q-1 -13 9 -4 Q1 3 -9 -3 Z" fill="#c8ccd0" stroke="#7a8694" stroke-width="1.2" /><circle cx="0" cy="-5" r="3.4" fill="#4a5a6a"/><circle cx="-1" cy="-6" r="1" fill="#fff"/><path d="M-8.5 3.5 L-6.75 -1.5 L-5.0 3.5 Z" fill="#2e5a7a" stroke="none" stroke-width="0" /><rect x="-7.45" y="0.7000000000000002" width="1.4" height="1.4" fill="#fff"/><rect x="-10.5" y="4.5" width="7.5" height="1.8" fill="#2a1616"/><path d="M-3 5.8 H0" fill="none" stroke="#2a1616" stroke-width="1.8" /><path d="M1.5 7 L3.25 2 L5.0 7 Z" fill="#2e5a7a" stroke="none" stroke-width="0" /><rect x="2.55" y="4.2" width="1.4" height="1.4" fill="#fff"/><rect x="-0.5" y="8" width="7.5" height="1.8" fill="#2a1616"/></g>
<g transform="translate(1950,121.5)"><path d="M-8 -11.4 H11.9 V11.1 H-11.8 V-7.6 Z" fill="#fff" stroke="#3a5a6c" stroke-width="1.8" /><path d="M-11.8 -7.6 L-8 -11.4 V-3 H-11.8 Z" fill="#2a4a5a" stroke="#2a4a5a" stroke-width="1" /><rect x="-7.5" y="-6.5" width="16" height="14" fill="#fff" stroke="#6a8494" stroke-width="1.6"/></g>
<g transform="translate(1983,121.5)"><path d="M-8 -11.4 H11.9 V11.1 H-11.8 V-7.6 Z" fill="#fff" stroke="#3a5a6c" stroke-width="1.8" /><path d="M-11.8 -7.6 L-8 -11.4 V-3 H-11.8 Z" fill="#2a4a5a" stroke="#2a4a5a" stroke-width="1" /><rect x="2" y="-8.5" width="7" height="7" fill="#56748a"/><rect x="-8.5" y="1" width="7" height="7" fill="#56748a"/><rect x="2" y="1" width="7" height="7" fill="#56748a"/></g>
</svg>
<svg class="vp" width="3840" height="2096" viewBox="0 0 3840 2096">
<defs><clipPath id="vpc"><rect x="67" y="140" width="3771" height="1866"/></clipPath></defs>
<g clip-path="url(#vpc)">
<rect x="67" y="140" width="3771" height="1866" fill="#fdfdfd"/>
<line x1="-3814.1" y1="9206.4" x2="15827.5" y2="2959.2" stroke="#d9d9ec" stroke-width="1.1" />
<line x1="-4010.0" y1="9032.4" x2="15631.6" y2="2785.2" stroke="#d9d9ec" stroke-width="1.1" />
<line x1="-4205.8" y1="8858.5" x2="15435.8" y2="2611.2" stroke="#d9d9ec" stroke-width="1.1" />
<line x1="-4401.6" y1="8684.5" x2="15240.0" y2="2437.3" stroke="#d9d9ec" stroke-width="1.1" />
<line x1="-4597.5" y1="8510.5" x2="15044.1" y2="2263.3" stroke="#d9d9ec" stroke-width="1.1" />
<line x1="-4793.3" y1="8336.6" x2="14848.3" y2="2089.4" stroke="#d9d9ec" stroke-width="1.1" />
<line x1="-4989.1" y1="8162.6" x2="14652.5" y2="1915.4" stroke="#d9d9ec" stroke-width="1.1" />
<line x1="-5185.0" y1="7988.7" x2="14456.7" y2="1741.4" stroke="#d9d9ec" stroke-width="1.1" />
<line x1="-5380.8" y1="7814.7" x2="14260.8" y2="1567.5" stroke="#d9d9ec" stroke-width="1.1" />
<line x1="-5576.6" y1="7640.7" x2="14065.0" y2="1393.5" stroke="#d9d9ec" stroke-width="1.1" />
<line x1="-5772.4" y1="7466.8" x2="13869.2" y2="1219.6" stroke="#d9d9ec" stroke-width="1.1" />
<line x1="-5968.3" y1="7292.8" x2="13673.3" y2="1045.6" stroke="#d9d9ec" stroke-width="1.1" />
<line x1="-6164.1" y1="7118.9" x2="13477.5" y2="871.6" stroke="#d9d9ec" stroke-width="1.1" />
<line x1="-6359.9" y1="6944.9" x2="13281.7" y2="697.7" stroke="#d9d9ec" stroke-width="1.1" />
<line x1="-6555.8" y1="6770.9" x2="13085.8" y2="523.7" stroke="#d9d9ec" stroke-width="1.1" />
<line x1="-6751.6" y1="6597.0" x2="12890.0" y2="349.8" stroke="#d9d9ec" stroke-width="1.1" />
<line x1="-6947.4" y1="6423.0" x2="12694.2" y2="175.8" stroke="#d9d9ec" stroke-width="1.1" />
<line x1="-7143.3" y1="6249.1" x2="12498.4" y2="1.8" stroke="#d9d9ec" stroke-width="1.1" />
<line x1="-7339.1" y1="6075.1" x2="12302.5" y2="-172.1" stroke="#d9d9ec" stroke-width="1.1" />
<line x1="-7534.9" y1="5901.1" x2="12106.7" y2="-346.1" stroke="#d9d9ec" stroke-width="1.1" />
<line x1="-7730.7" y1="5727.2" x2="11910.9" y2="-520.0" stroke="#d9d9ec" stroke-width="1.1" />
<line x1="-7926.6" y1="5553.2" x2="11715.0" y2="-694.0" stroke="#d9d9ec" stroke-width="1.1" />
<line x1="-8122.4" y1="5379.3" x2="11519.2" y2="-868.0" stroke="#d9d9ec" stroke-width="1.1" />
<line x1="-8318.2" y1="5205.3" x2="11323.4" y2="-1041.9" stroke="#d9d9ec" stroke-width="1.1" />
<line x1="-8514.1" y1="5031.3" x2="11127.5" y2="-1215.9" stroke="#d9d9ec" stroke-width="1.1" />
<line x1="-8905.7" y1="4683.4" x2="10735.9" y2="-1563.8" stroke="#d9d9ec" stroke-width="1.1" />
<line x1="-9101.6" y1="4509.5" x2="10540.1" y2="-1737.8" stroke="#d9d9ec" stroke-width="1.1" />
<line x1="-9297.4" y1="4335.5" x2="10344.2" y2="-1911.7" stroke="#d9d9ec" stroke-width="1.1" />
<line x1="-9493.2" y1="4161.5" x2="10148.4" y2="-2085.7" stroke="#d9d9ec" stroke-width="1.1" />
<line x1="-9689.0" y1="3987.6" x2="9952.6" y2="-2259.6" stroke="#d9d9ec" stroke-width="1.1" />
<line x1="-9884.9" y1="3813.6" x2="9756.7" y2="-2433.6" stroke="#d9d9ec" stroke-width="1.1" />
<line x1="-10080.7" y1="3639.7" x2="9560.9" y2="-2607.6" stroke="#d9d9ec" stroke-width="1.1" />
<line x1="-10276.5" y1="3465.7" x2="9365.1" y2="-2781.5" stroke="#d9d9ec" stroke-width="1.1" />
<line x1="-10472.4" y1="3291.7" x2="9169.2" y2="-2955.5" stroke="#d9d9ec" stroke-width="1.1" />
<line x1="-10668.2" y1="3117.8" x2="8973.4" y2="-3129.4" stroke="#d9d9ec" stroke-width="1.1" />
<line x1="-10864.0" y1="2943.8" x2="8777.6" y2="-3303.4" stroke="#d9d9ec" stroke-width="1.1" />
<line x1="-11059.9" y1="2769.9" x2="8581.8" y2="-3477.4" stroke="#d9d9ec" stroke-width="1.1" />
<line x1="-11255.7" y1="2595.9" x2="8385.9" y2="-3651.3" stroke="#d9d9ec" stroke-width="1.1" />
<line x1="-11451.5" y1="2421.9" x2="8190.1" y2="-3825.3" stroke="#d9d9ec" stroke-width="1.1" />
<line x1="-11647.3" y1="2248.0" x2="7994.3" y2="-3999.2" stroke="#d9d9ec" stroke-width="1.1" />
<line x1="-11843.2" y1="2074.0" x2="7798.4" y2="-4173.2" stroke="#d9d9ec" stroke-width="1.1" />
<line x1="-12039.0" y1="1900.1" x2="7602.6" y2="-4347.2" stroke="#d9d9ec" stroke-width="1.1" />
<line x1="-12234.8" y1="1726.1" x2="7406.8" y2="-4521.1" stroke="#d9d9ec" stroke-width="1.1" />
<line x1="-12430.7" y1="1552.1" x2="7210.9" y2="-4695.1" stroke="#d9d9ec" stroke-width="1.1" />
<line x1="-12626.5" y1="1378.2" x2="7015.1" y2="-4869.0" stroke="#d9d9ec" stroke-width="1.1" />
<line x1="-12822.3" y1="1204.2" x2="6819.3" y2="-5043.0" stroke="#d9d9ec" stroke-width="1.1" />
<line x1="-13018.2" y1="1030.3" x2="6623.5" y2="-5217.0" stroke="#d9d9ec" stroke-width="1.1" />
<line x1="-13214.0" y1="856.3" x2="6427.6" y2="-5390.9" stroke="#d9d9ec" stroke-width="1.1" />
<line x1="-13409.8" y1="682.3" x2="6231.8" y2="-5564.9" stroke="#d9d9ec" stroke-width="1.1" />
<line x1="-13605.6" y1="508.4" x2="6036.0" y2="-5738.8" stroke="#d9d9ec" stroke-width="1.1" />
<line x1="-1198.2" y1="9555.6" x2="-12948.0" y2="-882.0" stroke="#d9d9ec" stroke-width="1.1" />
<line x1="-870.8" y1="9451.5" x2="-12620.6" y2="-986.2" stroke="#d9d9ec" stroke-width="1.1" />
<line x1="-543.5" y1="9347.3" x2="-12293.3" y2="-1090.3" stroke="#d9d9ec" stroke-width="1.1" />
<line x1="-216.1" y1="9243.2" x2="-11965.9" y2="-1194.4" stroke="#d9d9ec" stroke-width="1.1" />
<line x1="111.2" y1="9139.1" x2="-11638.6" y2="-1298.5" stroke="#d9d9ec" stroke-width="1.1" />
<line x1="438.6" y1="9035.0" x2="-11311.2" y2="-1402.6" stroke="#d9d9ec" stroke-width="1.1" />
<line x1="766.0" y1="8930.9" x2="-10983.8" y2="-1506.8" stroke="#d9d9ec" stroke-width="1.1" />
<line x1="1093.3" y1="8826.7" x2="-10656.5" y2="-1610.9" stroke="#d9d9ec" stroke-width="1.1" />
<line x1="1420.7" y1="8722.6" x2="-10329.1" y2="-1715.0" stroke="#d9d9ec" stroke-width="1.1" />
<line x1="1748.1" y1="8618.5" x2="-10001.8" y2="-1819.1" stroke="#d9d9ec" stroke-width="1.1" />
<line x1="2075.4" y1="8514.4" x2="-9674.4" y2="-1923.2" stroke="#d9d9ec" stroke-width="1.1" />
<line x1="2402.8" y1="8410.2" x2="-9347.0" y2="-2027.4" stroke="#d9d9ec" stroke-width="1.1" />
<line x1="2730.1" y1="8306.1" x2="-9019.7" y2="-2131.5" stroke="#d9d9ec" stroke-width="1.1" />
<line x1="3057.5" y1="8202.0" x2="-8692.3" y2="-2235.6" stroke="#d9d9ec" stroke-width="1.1" />
<line x1="3384.9" y1="8097.9" x2="-8365.0" y2="-2339.7" stroke="#d9d9ec" stroke-width="1.1" />
<line x1="3712.2" y1="7993.8" x2="-8037.6" y2="-2443.8" stroke="#d9d9ec" stroke-width="1.1" />
<line x1="4039.6" y1="7889.6" x2="-7710.2" y2="-2548.0" stroke="#d9d9ec" stroke-width="1.1" />
<line x1="4366.9" y1="7785.5" x2="-7382.9" y2="-2652.1" stroke="#d9d9ec" stroke-width="1.1" />
<line x1="4694.3" y1="7681.4" x2="-7055.5" y2="-2756.2" stroke="#d9d9ec" stroke-width="1.1" />
<line x1="5021.7" y1="7577.3" x2="-6728.2" y2="-2860.3" stroke="#d9d9ec" stroke-width="1.1" />
<line x1="5349.0" y1="7473.2" x2="-6400.8" y2="-2964.4" stroke="#d9d9ec" stroke-width="1.1" />
<line x1="5676.4" y1="7369.1" x2="-6073.4" y2="-3068.6" stroke="#d9d9ec" stroke-width="1.1" />
<line x1="6003.7" y1="7264.9" x2="-5746.1" y2="-3172.7" stroke="#d9d9ec" stroke-width="1.1" />
<line x1="6331.1" y1="7160.8" x2="-5418.7" y2="-3276.8" stroke="#d9d9ec" stroke-width="1.1" />
<line x1="6658.5" y1="7056.7" x2="-5091.4" y2="-3380.9" stroke="#d9d9ec" stroke-width="1.1" />
<line x1="7313.2" y1="6848.5" x2="-4436.6" y2="-3589.2" stroke="#d9d9ec" stroke-width="1.1" />
<line x1="7640.5" y1="6744.3" x2="-4109.3" y2="-3693.3" stroke="#d9d9ec" stroke-width="1.1" />
<line x1="7967.9" y1="6640.2" x2="-3781.9" y2="-3797.4" stroke="#d9d9ec" stroke-width="1.1" />
<line x1="8295.2" y1="6536.1" x2="-3454.6" y2="-3901.5" stroke="#d9d9ec" stroke-width="1.1" />
<line x1="8622.6" y1="6432.0" x2="-3127.2" y2="-4005.6" stroke="#d9d9ec" stroke-width="1.1" />
<line x1="8950.0" y1="6327.9" x2="-2799.8" y2="-4109.8" stroke="#d9d9ec" stroke-width="1.1" />
<line x1="9277.3" y1="6223.7" x2="-2472.5" y2="-4213.9" stroke="#d9d9ec" stroke-width="1.1" />
<line x1="9604.7" y1="6119.6" x2="-2145.1" y2="-4318.0" stroke="#d9d9ec" stroke-width="1.1" />
<line x1="9932.1" y1="6015.5" x2="-1817.8" y2="-4422.1" stroke="#d9d9ec" stroke-width="1.1" />
<line x1="10259.4" y1="5911.4" x2="-1490.4" y2="-4526.2" stroke="#d9d9ec" stroke-width="1.1" />
<line x1="10586.8" y1="5807.2" x2="-1163.0" y2="-4630.4" stroke="#d9d9ec" stroke-width="1.1" />
<line x1="10914.1" y1="5703.1" x2="-835.7" y2="-4734.5" stroke="#d9d9ec" stroke-width="1.1" />
<line x1="11241.5" y1="5599.0" x2="-508.3" y2="-4838.6" stroke="#d9d9ec" stroke-width="1.1" />
<line x1="11568.9" y1="5494.9" x2="-181.0" y2="-4942.7" stroke="#d9d9ec" stroke-width="1.1" />
<line x1="11896.2" y1="5390.8" x2="146.4" y2="-5046.8" stroke="#d9d9ec" stroke-width="1.1" />
<line x1="12223.6" y1="5286.6" x2="473.8" y2="-5151.0" stroke="#d9d9ec" stroke-width="1.1" />
<line x1="12550.9" y1="5182.5" x2="801.1" y2="-5255.1" stroke="#d9d9ec" stroke-width="1.1" />
<line x1="12878.3" y1="5078.4" x2="1128.5" y2="-5359.2" stroke="#d9d9ec" stroke-width="1.1" />
<line x1="13205.7" y1="4974.3" x2="1455.8" y2="-5463.3" stroke="#d9d9ec" stroke-width="1.1" />
<line x1="13533.0" y1="4870.2" x2="1783.2" y2="-5567.4" stroke="#d9d9ec" stroke-width="1.1" />
<line x1="13860.4" y1="4766.1" x2="2110.6" y2="-5671.6" stroke="#d9d9ec" stroke-width="1.1" />
<line x1="14187.7" y1="4661.9" x2="2437.9" y2="-5775.7" stroke="#d9d9ec" stroke-width="1.1" />
<line x1="14515.1" y1="4557.8" x2="2765.3" y2="-5879.8" stroke="#d9d9ec" stroke-width="1.1" />
<line x1="14842.5" y1="4453.7" x2="3092.7" y2="-5983.9" stroke="#d9d9ec" stroke-width="1.1" />
<line x1="15169.8" y1="4349.6" x2="3420.0" y2="-6088.0" stroke="#d9d9ec" stroke-width="1.1" />
<line x1="-8709.9" y1="4857.4" x2="10931.7" y2="-1389.8" stroke="#7a7a7a" stroke-width="1" shape-rendering="crispEdges"/>
<line x1="6985.8" y1="6952.6" x2="-4764.0" y2="-3485.0" stroke="#7a7a7a" stroke-width="1" shape-rendering="crispEdges"/>
<polygon points="1110.5,1732.2 1373.4,1648.6 1386.5,1660.3 1421.8,1613.9 1328.2,1608.4 1341.7,1620.5 1132.2,1687.1 1006.6,1575.6 1028.9,1568.5 941.5,1549.7 931.3,1599.5 953.3,1592.6" fill="#358f4b" />
<polygon points="943.9,1572.6 954.4,1569.0 966.8,1572.6 966.3,1565.1 975.8,1561.9 976.5,1577.1 984.7,1583.8 975.5,1587.1 966.8,1578.6" fill="#ffffff" />
<polygon points="1348.1,1626.9 1358.3,1623.2 1400.9,1634.4 1391.2,1637.8" fill="#ffffff" />
<polygon points="1371.0,1618.9 1380.8,1615.9 1378.5,1642.1 1368.6,1645.1" fill="#ffffff" />
<polygon points="1055.5,1731.8 1084.5,1757.5 1089.4,1756.0 1075.7,1743.8 1148.1,1720.8 1161.8,1732.9 1166.7,1731.4 1137.7,1705.6 1132.8,1707.2 1146.5,1719.4 1074.2,1742.4 1060.4,1730.2" fill="none" stroke="#1a1a1a" stroke-width="1.1" stroke-linejoin="round" />
<polygon points="1055.5,924.3 1084.5,950.0 1089.4,948.5 1075.7,936.3 1148.1,913.3 1161.8,925.4 1166.7,923.9 1137.7,898.1 1132.8,899.7 1146.5,911.9 1074.2,934.9 1060.4,922.7" fill="none" stroke="#1a1a1a" stroke-width="1.1" stroke-linejoin="round" />
<line x1="1055.5" y1="1731.8" x2="1055.5" y2="924.3" stroke="#000" stroke-width="1.1" stroke-opacity="0.5"/>
<line x1="1084.5" y1="1757.5" x2="1084.5" y2="950.0" stroke="#000" stroke-width="1.1" stroke-opacity="0.5"/>
<line x1="1089.4" y1="1756.0" x2="1089.4" y2="948.5" stroke="#000" stroke-width="1.1" stroke-opacity="0.5"/>
<line x1="1075.7" y1="1743.8" x2="1075.7" y2="936.3" stroke="#000" stroke-width="1.1" stroke-opacity="0.5"/>
<line x1="1148.1" y1="1720.8" x2="1148.1" y2="913.3" stroke="#000" stroke-width="1.1" stroke-opacity="0.5"/>
<line x1="1161.8" y1="1732.9" x2="1161.8" y2="925.4" stroke="#000" stroke-width="1.1" stroke-opacity="0.5"/>
<line x1="1166.7" y1="1731.4" x2="1166.7" y2="923.9" stroke="#000" stroke-width="1.1" stroke-opacity="0.5"/>
<line x1="1137.7" y1="1705.6" x2="1137.7" y2="898.1" stroke="#111" stroke-width="1.1" stroke-opacity="0.95"/>
<line x1="1132.8" y1="1707.2" x2="1132.8" y2="899.7" stroke="#000" stroke-width="1.1" stroke-opacity="0.5"/>
<line x1="1146.5" y1="1719.4" x2="1146.5" y2="911.9" stroke="#000" stroke-width="1.1" stroke-opacity="0.5"/>
<line x1="1074.2" y1="1742.4" x2="1074.2" y2="934.9" stroke="#000" stroke-width="1.1" stroke-opacity="0.5"/>
<line x1="1060.4" y1="1730.2" x2="1060.4" y2="922.7" stroke="#111" stroke-width="1.1" stroke-opacity="0.95"/>
<rect x="1105.5" y="918.0" width="11.7" height="11.7" rx="1" fill="none" stroke="#ffff00" stroke-width="2.6"/>
<rect x="1106.6" y="919.1" width="9.5" height="9.5" fill="none" stroke="#d84a10" stroke-width="1.3"/>
<polygon points="2769.7,1186.9 2798.9,1212.8 2798.9,405.3 2769.7,379.4" fill="#0089cf" stroke="#101010" stroke-width="0.8" stroke-linejoin="round" />
<defs><linearGradient id="fil" x1="0" y1="0" x2="1" y2="0"><stop offset="0" stop-color="#006aa8"/><stop offset="0.7" stop-color="#1aa6ee"/><stop offset="1" stop-color="#0a8ed8"/></linearGradient></defs>
<polygon points="2780.8,1201.9 2787.6,1202.8 2787.6,395.3 2780.8,394.4" fill="url(#fil)" stroke="#0b2a40" stroke-width="0.8" stroke-linejoin="round" />
<polygon points="2712.7,1223.6 2780.8,1201.9 2780.8,394.4 2712.7,416.1" fill="#00527f" stroke="#101010" stroke-width="1" stroke-linejoin="round" />
<polygon points="2712.7,416.1 2785.1,393.1 2783.5,391.7 2711.2,414.7" fill="#0a72ae" stroke="#101010" stroke-width="0.8" stroke-linejoin="round" />
<polygon points="2798.9,1212.8 2803.8,1211.3 2803.8,403.8 2798.9,405.3" fill="#00527f" stroke="#101010" stroke-width="1" stroke-linejoin="round" />
<polygon points="2798.9,405.3 2803.8,403.8 2774.6,377.9 2769.7,379.4" fill="#0a72ae" stroke="#101010" stroke-width="1" stroke-linejoin="round" />
<line x1="2749.0" y1="482.7" x2="2749.0" y2="409.8" stroke="#0a2030" stroke-width="1" />
<polygon points="2719.4,427.9 2758.7,415.4 2738.2,397.2 2698.9,409.7" fill="#8a0000" stroke="#101010" stroke-width="0.8" stroke-linejoin="round" />
<polygon points="2719.4,430.8 2758.7,418.3 2758.7,415.4 2719.4,427.9" fill="#700000" stroke="#101010" stroke-width="0.8" stroke-linejoin="round" />
<polygon points="2724.3,502.2 2758.7,491.3 2749.0,482.7 2714.7,493.7" fill="#8a0000" stroke="#101010" stroke-width="0.8" stroke-linejoin="round" />
<polygon points="2724.3,505.2 2758.7,494.2 2758.7,491.3 2724.3,502.2" fill="#700000" stroke="#101010" stroke-width="0.8" stroke-linejoin="round" />
<polygon points="2692.5,1211.5 2721.6,1237.4 2721.6,429.9 2692.5,404.0" fill="#0089cf" stroke="#101010" stroke-width="1" stroke-linejoin="round" />
<polygon points="2721.6,1237.4 2726.6,1235.8 2726.6,428.3 2721.6,429.9" fill="#00568a" stroke="#101010" stroke-width="1" stroke-linejoin="round" />
<polygon points="2721.6,429.9 2726.6,428.3 2697.4,402.4 2692.5,404.0" fill="#0a72ae" stroke="#101010" stroke-width="1" stroke-linejoin="round" />
<polygon points="1439.6,899.2 2709.7,495.2 2709.7,422.2 1439.6,826.2" fill="#700000" stroke="#101010" stroke-width="0.8" stroke-linejoin="round" />
<line x1="1439.6" y1="830.1" x2="2709.7" y2="426.1" stroke="#2a0000" stroke-width="1" />
<line x1="1439.6" y1="895.4" x2="2709.7" y2="491.4" stroke="#2a0000" stroke-width="1" />
<polygon points="1449.2,907.8 2719.4,503.8 2709.7,495.2 1439.6,899.2" fill="#8a0000" stroke="#101010" stroke-width="0.8" stroke-linejoin="round" />
<polygon points="1449.2,910.7 2719.4,506.7 2719.4,503.8 1449.2,907.8" fill="#700000" stroke="#101010" stroke-width="0.8" stroke-linejoin="round" />
<polygon points="1449.2,831.9 2719.4,427.9 2698.9,409.7 1428.8,813.7" fill="#8a0000" stroke="#101010" stroke-width="1" stroke-linejoin="round" />
<polygon points="1449.2,834.8 2719.4,430.8 2719.4,427.9 1449.2,831.9" fill="#700000" stroke="#101010" stroke-width="0.8" stroke-linejoin="round" />
<polygon points="1428.8,816.6 1449.2,834.8 1449.2,831.9 1428.8,813.7" fill="#8a0000" stroke="#101010" stroke-width="0.8" stroke-linejoin="round" />
<polygon points="1428.8,892.5 1449.2,910.7 1449.2,907.8 1428.8,889.6" fill="#8a0000" stroke="#101010" stroke-width="0.8" stroke-linejoin="round" />
<line x1="1439.0" y1="898.7" x2="1439.0" y2="825.7" stroke="#101010" stroke-width="1.6" />
</g></svg>
<svg class="abs" style="left:0;top:140px" width="67" height="760" viewBox="0 140 67 760">
<defs><linearGradient id="lg" x1="0" y1="0" x2="1" y2="0"><stop offset="0" stop-color="#c3c7cd"/><stop offset="0.15" stop-color="#d0d4d9"/><stop offset="0.7" stop-color="#b3b9c0"/><stop offset="1" stop-color="#959ca5"/></linearGradient><linearGradient id="yg" x1="0" y1="0" x2="1" y2="0"><stop offset="0" stop-color="#fff4c8"/><stop offset="1" stop-color="#fcd675"/></linearGradient><linearGradient id="lh" x1="0" y1="0" x2="1" y2="0"><stop offset="0" stop-color="#5d646e"/><stop offset="1" stop-color="#a4aab2"/></linearGradient></defs>
<path d="M0 140 H32 Q36 140 36 144 V893 Q36 897 32 897 H0 Z" fill="url(#lg)"/>
<path d="M0 878 H36 V893 Q36 897 32 897 H0 Z" fill="url(#lh)"/>
<path d="M23 882 V892 M26 882 L31 887 L26 892" stroke="#e8eaee" stroke-width="1.6" fill="none"/>
<rect x="10.0" y="144" width="2" height="2" fill="#111"/><rect x="11.0" y="145" width="2" height="2" fill="#fff" opacity="0.8"/>
<rect x="13.3" y="144" width="2" height="2" fill="#111"/><rect x="14.3" y="145" width="2" height="2" fill="#fff" opacity="0.8"/>
<rect x="16.6" y="144" width="2" height="2" fill="#111"/><rect x="17.6" y="145" width="2" height="2" fill="#fff" opacity="0.8"/>
<rect x="19.9" y="144" width="2" height="2" fill="#111"/><rect x="20.9" y="145" width="2" height="2" fill="#fff" opacity="0.8"/>
<rect x="23.2" y="144" width="2" height="2" fill="#111"/><rect x="24.2" y="145" width="2" height="2" fill="#fff" opacity="0.8"/>
<rect x="8" y="184.8" width="20" height="1" fill="#7b828b"/><rect x="8" y="185.8" width="20" height="1" fill="#fff"/>
<rect x="8" y="352.7" width="20" height="1" fill="#7b828b"/><rect x="8" y="353.7" width="20" height="1" fill="#fff"/>
<rect x="8" y="392" width="20" height="1" fill="#7b828b"/><rect x="8" y="393" width="20" height="1" fill="#fff"/>
<rect x="8" y="433" width="20" height="1" fill="#7b828b"/><rect x="8" y="434" width="20" height="1" fill="#fff"/>
<rect x="8" y="665.5" width="20" height="1" fill="#7b828b"/><rect x="8" y="666.5" width="20" height="1" fill="#fff"/>
<rect x="8" y="801" width="20" height="1" fill="#7b828b"/><rect x="8" y="802" width="20" height="1" fill="#fff"/>
<rect x="8" y="841.7" width="20" height="1" fill="#7b828b"/><rect x="8" y="842.7" width="20" height="1" fill="#fff"/>
<g transform="translate(18.5,165)"><path d="M-2 -10 H6 L9 -7 V5 H-2 Z" fill="#fff" stroke="#111" stroke-width="1.6" /><path d="M-9 -4 H-1 L2 -1 V10 H-9 Z" fill="#fff" stroke="#111" stroke-width="1.6" /></g>
<g transform="translate(18.5,205.5)"><g><rect x="-11" y="-10" width="9" height="6" fill="#d89aa8" stroke="#111" stroke-width="1.3"/><rect x="-9" y="-6" width="9" height="5" fill="#6e74b0" stroke="#111" stroke-width="1.3"/><rect x="-6" y="-2" width="9" height="5" fill="#d89aa8" stroke="#111" stroke-width="1.3"/><rect x="2" y="4" width="10" height="7" fill="#6e74b0" stroke="#111" stroke-width="1.5"/></g><path d="M-1 -9 V3 L2 0 L5 6 L7 5 L4 -1 H8 Z" fill="#fff" stroke="#111" stroke-width="1.1" /></g>
<g transform="translate(18.5,237)"><g opacity="0.45"><rect x="-11" y="-10" width="9" height="6" fill="#cccccc" stroke="#111" stroke-width="1.3"/><rect x="-9" y="-6" width="9" height="5" fill="#bbbbbb" stroke="#111" stroke-width="1.3"/><rect x="-6" y="-2" width="9" height="5" fill="#cccccc" stroke="#111" stroke-width="1.3"/><rect x="2" y="4" width="10" height="7" fill="#bbbbbb" stroke="#111" stroke-width="1.5"/></g><path d="M-1 -9 V3 L2 0 L5 6 L7 5 L4 -1 H8 Z" fill="#fff" stroke="#111" stroke-width="1.1" /></g>
<g transform="translate(18.5,269.5)"><rect x="-11" y="-1" width="9" height="6" fill="#d89aa8" stroke="#111" stroke-width="1.3"/><rect x="-9" y="3" width="9" height="6" fill="#6e74b0" stroke="#111" stroke-width="1.3"/><rect x="-2" y="-11" width="11" height="6" fill="#6e74b0" stroke="#111" stroke-width="1.3"/><path d="M-1 -5 V7 L2 4 L5 10 L7 9 L4 3 H8 Z" fill="#fff" stroke="#111" stroke-width="1.1" /><path d="M10 -3 V9 M8 -1 L10 -4 L12 -1 M8 7 L10 10 L12 7" fill="none" stroke="#111" stroke-width="1.3" /></g>
<g transform="translate(18.5,301.5)"><rect x="-11" y="-10" width="9" height="6" fill="#d89aa8" stroke="#111" stroke-width="1.3"/><rect x="-8" y="-4" width="9" height="5" fill="#d89aa8" stroke="#111" stroke-width="1.3"/><rect x="-3" y="4" width="13" height="7" fill="none" stroke="#aaa" stroke-width="1.3"/><path d="M5 -10 V-6 M5 -2 V2 M1 -4 H3 M7 -4 H9" fill="none" stroke="#4080c0" stroke-width="1.2" /></g>
<g transform="translate(18.5,334)"><path d="M-11 -4 H9 M-11 1 H9 M-11 6 H9 M-7 -8 V10 M-2 -8 V10 M3 -8 V10" fill="none" stroke="#d08080" stroke-width="0.8" /><rect x="-6" y="-10" width="11" height="7" fill="#6e74b0" stroke="#111" stroke-width="1.3"/><path d="M3 -8 V4 L6 1 L9 7 L11 6 L8 0 H12 Z" fill="#fff" stroke="#111" stroke-width="1.1" /></g>
<g transform="translate(18.5,373)"><text x="-12" y="5" font-family="Liberation Sans" font-size="13" fill="#111">?</text><path d="M1 -10 Q-2 -10 -2 -6 V-2 L-4 0 L-2 2 V6 Q-2 10 1 10" fill="none" stroke="#111" stroke-width="1.6" /><rect x="3" y="-11" width="7" height="22" fill="#111"/><circle cx="6.5" cy="-8" r="1" fill="#f0e000"/><circle cx="6.5" cy="-5" r="1" fill="#f0e000"/><circle cx="6.5" cy="-2" r="1" fill="#f0e000"/><circle cx="6.5" cy="1" r="1" fill="#f0e000"/><circle cx="6.5" cy="4" r="1" fill="#f0e000"/><circle cx="6.5" cy="7" r="1" fill="#f0e000"/></g>
<g transform="translate(18.5,413.5)"><rect x="-8" y="-10" width="16" height="20" rx="2" fill="#fff" stroke="#111" stroke-width="1.6"/><path d="M-5 -6 H5 M-5 -2 H5 M-5 2 H3 M-5 6 H5" fill="none" stroke="#111" stroke-width="1.4" /></g>
<g transform="translate(18.5,453)"><path d="M-8 -6 L-4 -10 H11 L7 -6 Z M-8 10 L-4 6 H11 L7 10 Z" fill="none" stroke="#c02020" stroke-width="1.6" /><path d="M1 -7 V6 M-2 -4 L1 -7 L4 -4" fill="none" stroke="#2b5a7a" stroke-width="1.4" /></g>
<g transform="translate(18.5,485)"><path d="M-10 -10 H-2 L1 -7 V3 H-10 Z" fill="#fff" stroke="#111" stroke-width="1.5" /><path d="M-2 -2 H7 L10 1 V11 H-2 Z" fill="#fff" stroke="#3b5a6c" stroke-width="1.5" /><path d="M-8 -6 H-3 M-8 -3 H-3 M0 3 H7 M0 6 H7" fill="none" stroke="#111" stroke-width="1" /></g>
<g transform="translate(18.5,517)"><g opacity="0.55"><rect x="-9" y="-8" width="14" height="17" fill="#c8b070" stroke="#666" stroke-width="1.4"/><rect x="-5" y="-11" width="6" height="4" fill="#ddd" stroke="#666"/><rect x="0" y="0" width="10" height="10" fill="#fff" stroke="#555" stroke-width="1.3"/></g></g>
<g transform="translate(18.5,549.5)"><rect x="-11" y="-6" width="8" height="13" fill="#a8c0d4" stroke="#3b5a6c" stroke-width="1.3"/><rect x="1" y="-2" width="8" height="13" fill="none" stroke="#555" stroke-width="1.2" stroke-dasharray="1.5 1.5"/><path d="M0 -6 Q4 -11 7 -5 M5 -6 L7 -4 L9 -7" fill="none" stroke="#111" stroke-width="1.3" /></g>
<g transform="translate(18.5,580.5)"><rect x="-11" y="-7" width="8" height="12" fill="#a8c0d4" stroke="#3b5a6c" stroke-width="1.3"/><rect x="-7" y="-3" width="8" height="12" fill="#a8c0d4" stroke="#3b5a6c" stroke-width="1.3"/><rect x="-3" y="0" width="8" height="11" fill="#a8c0d4" stroke="#3b5a6c" stroke-width="1.3"/><path d="M0 -6 Q4 -11 7 -5 M5 -6 L7 -4 L9 -7" fill="none" stroke="#111" stroke-width="1.3" /></g>
<g transform="translate(18.5,613.5)"><rect x="-11" y="-10" width="8" height="12" fill="#a8c0d4" stroke="#3b5a6c" stroke-width="1.3"/><rect x="-2" y="-8" width="8" height="12" fill="#a8c0d4" stroke="#3b5a6c" stroke-width="1.3"/><rect x="4" y="-10" width="8" height="12" fill="#a8c0d4" stroke="#3b5a6c" stroke-width="1.3"/><path d="M-10 6 Q0 12 10 6 M7 5 L10 6 L8 9" fill="none" stroke="#111" stroke-width="1.3" /></g>
<g transform="translate(18.5,645.5)"><circle cx="8.0" cy="0.0" r="2.2" fill="#fff" stroke="#111" stroke-width="1.6"/><circle cx="5.7" cy="5.7" r="2.2" fill="#fff" stroke="#111" stroke-width="1.6"/><circle cx="0.0" cy="8.0" r="2.2" fill="#fff" stroke="#111" stroke-width="1.6"/><circle cx="-5.7" cy="5.7" r="2.2" fill="#fff" stroke="#111" stroke-width="1.6"/><circle cx="-8.0" cy="0.0" r="2.2" fill="#fff" stroke="#111" stroke-width="1.6"/><circle cx="-5.7" cy="-5.6" r="2.2" fill="#fff" stroke="#111" stroke-width="1.6"/><circle cx="-0.0" cy="-8.0" r="2.2" fill="#fff" stroke="#111" stroke-width="1.6"/><circle cx="5.6" cy="-5.7" r="2.2" fill="#fff" stroke="#111" stroke-width="1.6"/></g>
<g transform="translate(18.5,685.7)"><rect x="-7" y="-7" width="16" height="12" fill="#a8d0ec" stroke="#6a90aa" stroke-width="1"/><path d="M-11 11 L11 -11" fill="none" stroke="#111" stroke-width="1.6" /></g>
<g transform="translate(18.5,717.7)"><rect x="-11" y="-10" width="7" height="20" fill="#cfd8e0" stroke="#2b4c66" stroke-width="1.5"/><path d="M-11 -6 H-8 M-11 -2 H-8 M-11 2 H-8 M-11 6 H-8" fill="none" stroke="#2b4c66" stroke-width="1" /><path d="M-3 -10 H11 V-7 Q5 -4 5 0 Q5 4 11 7 V10 H-3 V7 Q2 4 2 0 Q2 -4 -3 -7 Z" fill="#d0d0d0" stroke="#333" stroke-width="1.2" /><path d="M5 2 L10 7 L7 8 Z" fill="#3b5a6c" stroke="none" stroke-width="0" /></g>
<g transform="translate(18.5,749.6)"><path d="M-11 -1 H11" fill="none" stroke="#2b4c66" stroke-width="1" stroke-dasharray="2 1.5"/><rect x="-4" y="1" width="15" height="6" fill="#a8d0ec"/><path d="M-11 11 L11 -11" fill="none" stroke="#111" stroke-width="1.6" /><path d="M-11 8 H11" fill="none" stroke="#2b4c66" stroke-width="1.2" /></g>
<g transform="translate(18.5,782)"><path d="M-7 10 V-6 H11" fill="none" stroke="#444" stroke-width="4" /><path d="M-7 10 V-6 H11" fill="none" stroke="#ddd" stroke-width="1.5" stroke-dasharray="1 1"/><circle cx="-7" cy="-6" r="4" fill="none" stroke="#8040a0" stroke-width="1.4"/></g>
<g transform="translate(18.5,822)"><rect x="-11" y="-7" width="9" height="16" rx="4" fill="#2a4a7a" stroke="#111"/><rect x="2" y="-10" width="8" height="13" fill="#e8e0a0" stroke="#111"/><circle cx="3" cy="6" r="5" fill="#e02020" stroke="#111"/></g>
<g transform="translate(18.5,861.7)"><text x="0" y="-2" text-anchor="middle" font-family="Liberation Sans" font-weight="bold" font-size="9" fill="#2b5a7a" letter-spacing="0.5">AUTO</text><text x="0" y="8" text-anchor="middle" font-family="Liberation Sans" font-weight="bold" font-size="10" fill="#2b5a7a">ABC</text><path d="M-10 10.5 H10" fill="none" stroke="#2b5a7a" stroke-width="1.6" /></g>
<rect x="37.5" y="144.5" width="27" height="115.5" fill="url(#yg)" stroke="#b9b29a" stroke-width="1"/>
<text transform="translate(43.5,145) rotate(90)" font-family="Liberation Sans, sans-serif" font-size="18" fill="#4d5262">Yapı Ağacı</text>
</svg>
<div class="abs" style="left:71px;top:142px;font-size:12.4px;color:#ff0000;white-space:nowrap;font-family:'Liberation Sans',sans-serif" id="wp">Work Plane 3 - (Horizontal)</div>
<svg class="abs" style="left:3780px;top:140px" width="60" height="20" viewBox="3780 140 60 20">
 <g stroke="#111" stroke-width="1" fill="#d4d4d4">
  <rect x="3784.5" y="142.5" width="17" height="15"/><rect x="3802.5" y="142.5" width="17" height="15"/><rect x="3820.5" y="142.5" width="17" height="15"/>
 </g>
 <g stroke="#111" stroke-width="1.1" fill="none">
  <path d="M3787 145 H3799 L3794 150 V156 L3792 157 V150 Z"/>
  <path d="M3806 156 V145 L3816 156 V145"/>
  <path d="M3824 145 L3829 156 L3834 145"/>
 </g>
</svg>
<div class="abs" id="dlg" style="left:1712px;top:504px;width:234px;height:222px;background:#f0f0f0;border:1px solid #a8a8a8;border-top-color:#8a8a8a;box-shadow:0 1px 14px rgba(0,0,0,0.30)">
 <div class="abs" style="left:0;top:0;width:232px;height:45px;background:#fff"></div>
 <div class="abs" style="left:12px;top:14px;font-size:16px;color:#000">Taşı</div>
 <div class="abs" style="left:201px;top:10px;width:30px;height:30px;background:#c75050"></div>
 <svg class="abs" style="left:201px;top:10px" width="30" height="30" viewBox="0 0 30 30"><path d="M11 11.5 L19 19.5 M19 11.5 L11 19.5" stroke="#fff" stroke-width="2.2"/></svg>
 <div class="abs dl" style="left:4px;top:54px">Dx :</div>
 <div class="abs dl" style="left:4px;top:87px">Dy :</div>
 <div class="abs dl" style="left:4px;top:120px">Dz :</div>
 <div class="abs ib" style="left:57px;top:49px"><span>1</span></div>
 <div class="abs ib" style="left:57px;top:82px"><span>0</span></div>
 <div class="abs ib" style="left:57px;top:116px"><span>0</span></div>
 <div class="abs dl" style="left:162px;top:54px">[m]</div>
 <div class="abs dl" style="left:162px;top:87px">[m]</div>
 <div class="abs dl" style="left:162px;top:120px">[m]</div>
 <div class="abs" style="left:4px;top:148px;width:225px;height:31px;background:#e1e1e1;border:1px solid #adadad;font-size:16.5px;color:#000;text-align:center;line-height:29px">Bitir (Global)</div>
</div>

<div id="cmd" class="abs">
 <div style="top:1px">*İptal*</div>
 <div style="top:14px">Komut :</div>
 <div style="top:27px">*İptal*</div>
 <div style="top:40px">Komut :</div>
</div>
<div id="status" class="abs">
 <div class="band"></div>
 <span style="left:6px">BOŞ</span>
 <i style="left:258px"></i>
 <span style="left:267px">(Seçilenler : 1)</span>
 <i style="left:3545px"></i>
 <span style="left:3549px;word-spacing:3px">kgf / m</span>
 <i style="left:3621px"></i>
 <span style="left:3631px">1 : 50</span>
 <i style="left:3697px"></i>
 <span style="left:3705px">% 10</span>
</div>
</body></html>
